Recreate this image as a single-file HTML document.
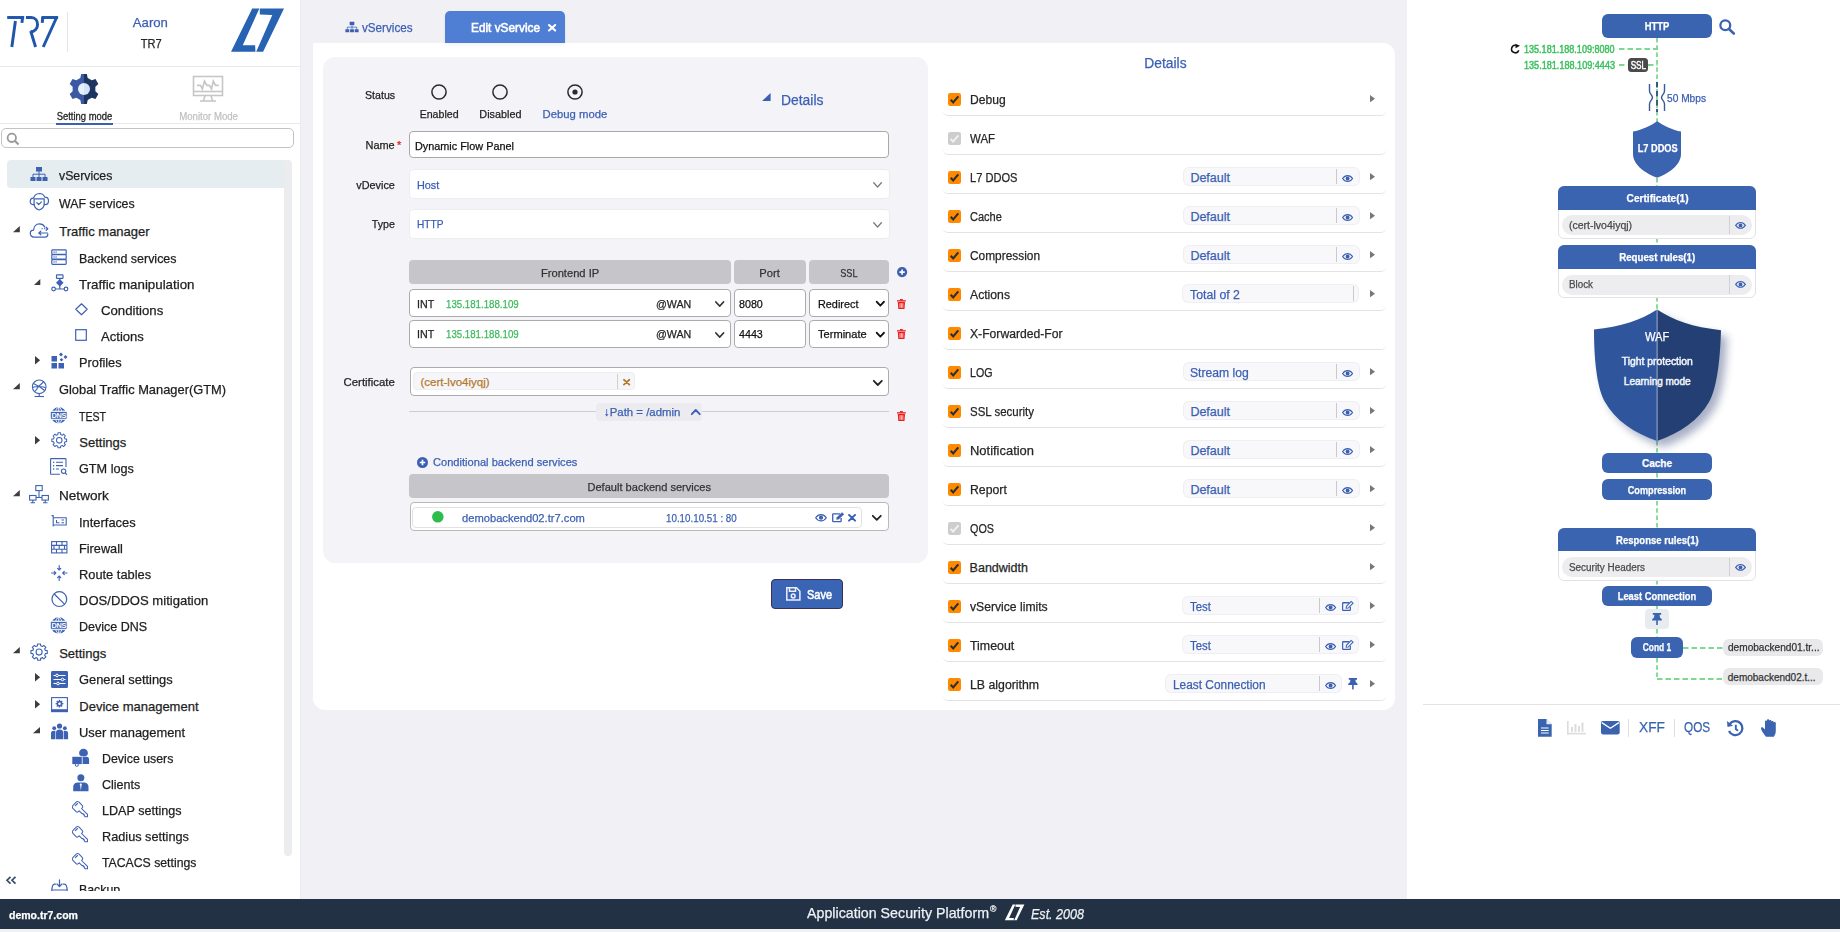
<!DOCTYPE html>
<html><head><meta charset="utf-8"><title>TR7 - Edit vService</title>
<style>
html,body{margin:0;padding:0;width:1840px;height:932px;overflow:hidden;background:#fff;}
body{position:relative;font-family:"Liberation Sans",sans-serif;}
.t{position:absolute;line-height:1;white-space:nowrap;-webkit-text-stroke:0.25px currentColor;}
.r{position:absolute;box-sizing:border-box;}
.s{position:absolute;overflow:visible;}
</style></head><body>
<div class="r" style="left:0.00px;top:0.00px;width:300.00px;height:899.00px;background:#fff;"></div>
<div class="r" style="left:300.00px;top:0.00px;width:1107.00px;height:899.00px;background:#f0f0f5;"></div>
<div class="r" style="left:1407.00px;top:0.00px;width:433.00px;height:899.00px;background:#fff;"></div>
<div class="r" style="left:0.00px;top:899.00px;width:1840.00px;height:29.50px;background:#223244;"></div>
<div class="r" style="left:0.00px;top:928.50px;width:1840.00px;height:3.50px;background:#f1f1f3;"></div>
<svg class="s" style="left:4.00px;top:12.00px;" width="60.00" height="38.00" viewBox="0 0 1472 932" preserveAspectRatio="none"><g fill="none" stroke="#1f55ad" stroke-width="72" stroke-linecap="butt" stroke-linejoin="miter"><path d="M78,135 L495,135"/><path d="M455,135 L440,265"/><path d="M280,222 L192,858"/><path d="M538,135 L665,135 C770,135 823,215 823,305 C823,410 745,485 650,485"/><path d="M655,470 L775,858"/><path d="M918,135 L1328,135"/><path d="M950,135 L938,265"/><path d="M1290,135 L962,858"/></g></svg>
<div class="r" style="left:67.00px;top:12.00px;width:1.00px;height:40.00px;background:#e3e7ec;"></div>
<div class="t" style="left:133.35px;top:16.29px;font-size:13px;color:#3b5fb3;font-weight:400;transform:scaleX(1.0118);transform-origin:center 0;">Aaron</div>
<div class="t" style="left:138.72px;top:37.29px;font-size:13px;color:#262626;font-weight:400;transform:scaleX(0.8551);transform-origin:center 0;">TR7</div>
<svg class="s" style="left:226.00px;top:4.00px;" width="64.00" height="52.00" viewBox="0 0 1147 932" preserveAspectRatio="none"><polygon fill="#2862b2" points="470,80 598,80 300,740 522,740 528,855 90,855"/><polygon fill="#2862b2" points="606,80 1040,80 665,855 542,855 830,195 606,190"/></svg>
<div class="r" style="left:0.00px;top:66.00px;width:300.00px;height:1.00px;background:#e6eaee;"></div>
<div class="r" style="left:300.00px;top:0.00px;width:1.00px;height:899.00px;background:#e7eaee;"></div>
<div class="r" style="left:0.00px;top:123.00px;width:300.00px;height:1.00px;background:#e6eaee;"></div>
<svg class="s" style="left:64.00px;top:69.00px;" width="40.00" height="40.00" viewBox="0 0 40 40" preserveAspectRatio="none"><defs><clipPath id="gl"><rect x="0" y="0" width="20" height="40"/></clipPath><clipPath id="gr"><rect x="20" y="0" width="20" height="40"/></clipPath></defs><path d="M16.30,9.01 L17.15,5.07 L22.85,5.07 L23.70,9.01 L27.67,11.30 L31.51,10.07 L34.35,15.00 L31.37,17.71 L31.37,22.29 L34.35,25.00 L31.51,29.93 L27.67,28.70 L23.70,30.99 L22.85,34.93 L17.15,34.93 L16.30,30.99 L12.33,28.70 L8.49,29.93 L5.65,25.00 L8.63,22.29 L8.63,17.71 L5.65,15.00 L8.49,10.07 L12.33,11.30Z" fill="#3b59a3" clip-path="url(#gl)"/><path d="M16.30,9.01 L17.15,5.07 L22.85,5.07 L23.70,9.01 L27.67,11.30 L31.51,10.07 L34.35,15.00 L31.37,17.71 L31.37,22.29 L34.35,25.00 L31.51,29.93 L27.67,28.70 L23.70,30.99 L22.85,34.93 L17.15,34.93 L16.30,30.99 L12.33,28.70 L8.49,29.93 L5.65,25.00 L8.63,22.29 L8.63,17.71 L5.65,15.00 L8.49,10.07 L12.33,11.30Z" fill="#1d3461" clip-path="url(#gr)"/><circle cx="20" cy="20" r="10.6" fill="#3b59a3" clip-path="url(#gl)"/><circle cx="20" cy="20" r="10.6" fill="#1d3461" clip-path="url(#gr)"/><circle cx="20" cy="20" r="6" fill="#e6f0fd" clip-path="url(#gl)"/><circle cx="20" cy="20" r="6" fill="#d3e3f9" clip-path="url(#gr)"/></svg>
<div class="t" style="left:54.94px;top:111.63px;font-size:10px;color:#262626;font-weight:400;-webkit-text-stroke:0.30px #262626;transform:scaleX(0.9418);transform-origin:center 0;">Setting mode</div>
<div class="r" style="left:56.00px;top:123.00px;width:57.00px;height:2.00px;background:#3b5fb3;"></div>
<svg class="s" style="left:192.00px;top:75.00px;" width="32.00" height="28.00" viewBox="0 0 32 28" preserveAspectRatio="none"><g fill="none" stroke="#c6c6c6" stroke-width="1.6"><rect x="1.5" y="1.5" width="29" height="19"/><line x1="1.5" y1="16.5" x2="30.5" y2="16.5"/><path d="M5,10.4 H8.5 L10.3,14 L12.5,6.1 L14.9,10.4 H17.4 L19.5,14 L21.3,6.1 L23.5,10.4 H26.8"/><path d="M13,21 L11.5,25.5 M19,21 L20.5,25.5"/><line x1="8" y1="26" x2="24" y2="26"/></g></svg>
<div class="t" style="left:178.03px;top:111.63px;font-size:10px;color:#c2c2c2;font-weight:400;transform:scaleX(0.9617);transform-origin:center 0;">Monitor Mode</div>
<div class="r" style="left:1.00px;top:128.00px;width:293.00px;height:20.00px;border:1px solid #c3c3c3;border-radius:5px;background:#fff;"></div>
<svg class="s" style="left:6.00px;top:132.00px;" width="14.00" height="14.00" viewBox="0 0 14 14" preserveAspectRatio="none"><circle cx="5.8" cy="5.8" r="4.2" fill="none" stroke="#9a9a9a" stroke-width="1.8"/><line x1="8.8" y1="8.8" x2="12.5" y2="12.5" stroke="#9a9a9a" stroke-width="2"/></svg>
<div class="r" style="left:7.00px;top:160.00px;width:281.00px;height:28.00px;background:#e6edf1;border-radius:4px;"></div>
<div class="r" style="left:284.00px;top:160.00px;width:8.00px;height:696.00px;background:#ebecee;border-radius:4px;"></div>
<svg class="s" style="left:30.00px;top:166.00px;" width="18.00" height="16.00" viewBox="0 0 18 16" preserveAspectRatio="none"><g fill="#3d62b4"><rect x="6" y="1" width="6" height="4.5"/><rect x="0.5" y="11" width="5" height="4"/><rect x="6.5" y="11" width="5" height="4"/><rect x="12.5" y="11" width="5" height="4"/></g><path d="M9,5.5 V11 M3,11 V8.2 H15 V11" fill="none" stroke="#3d62b4" stroke-width="1" stroke-linecap="round" stroke-linejoin="round"/></svg>
<svg class="s" style="left:30.00px;top:192.00px;" width="19.00" height="19.00" viewBox="0 0 19 19" preserveAspectRatio="none"><path d="M4.1,12.6 H3 C0.9,12.6 -0.1,10.8 0.3,8.8 C0.6,7 2,6 3.6,6.2 C4.2,3.5 6.2,1.6 9.3,1.5 C12,1.5 14,3.2 14.8,5.2 C17,5.2 18.5,6.8 18.5,9 C18.5,11.2 17,12.6 15,12.6 H14.2" fill="none" stroke="#3d62b4" stroke-width="1.2" stroke-linecap="round" stroke-linejoin="round"/><path d="M4.1,6.9 H14.2 V12 C14.2,15 12,17 9.15,18 C6.3,17 4.1,15 4.1,12 Z" fill="none" stroke="#3d62b4" stroke-width="1.2" stroke-linecap="round" stroke-linejoin="round"/><path d="M6.8,10.6 L8.7,12.5 L11.5,9.9" fill="none" stroke="#3d62b4" stroke-width="1.2" stroke-linecap="round" stroke-linejoin="round"/></svg>
<svg class="s" style="left:29.50px;top:222.50px;" width="19.00" height="15.00" viewBox="0 0 19 15" preserveAspectRatio="none"><path d="M17.8,11.2 C17.8,13 16.6,14 15,14 H3.8 C1.8,14 0.3,12.5 0.3,10.5 C0.3,8.5 1.8,7 3.6,7 C3.8,3.5 6.2,0.9 9.5,0.9 C11.8,0.9 13.8,2.1 14.8,4" fill="none" stroke="#3d62b4" stroke-width="1.25" stroke-linecap="round" stroke-linejoin="round"/><path d="M17.5,10 H8.8 M10.8,8.2 L8.8,10 L10.8,11.8" fill="none" stroke="#3d62b4" stroke-width="1.2" stroke-linecap="round" stroke-linejoin="round"/><path d="M11.5,5.8 H17.6" stroke="#3d62b4" stroke-width="1.1" stroke-dasharray="1.3,1.2"/><path d="M16.2,4.3 L17.8,5.8 L16.2,7.3" fill="none" stroke="#3d62b4" stroke-width="1.2" stroke-linecap="round" stroke-linejoin="round"/></svg>
<svg class="s" style="left:13.00px;top:225.50px;" width="6.80" height="6.20" viewBox="0 0 10 10" preserveAspectRatio="none"><polygon points="0,10 10,0 10,10" fill="#3d3d3d"/></svg>
<svg class="s" style="left:51.00px;top:248.50px;" width="16.00" height="16.50" viewBox="0 0 16 16.5" preserveAspectRatio="none"><g fill="none" stroke="#3d62b4" stroke-width="1.2"><rect x="0.8" y="0.8" width="14.4" height="4.6" rx="0.8"/><rect x="0.8" y="5.6" width="14.4" height="4.6" rx="0.8"/><rect x="0.8" y="10.6" width="14.4" height="4.8" rx="0.8"/></g><g fill="#3d62b4"><rect x="2.5" y="2.5" width="1.2" height="1.2"/><rect x="4.5" y="2.5" width="1.2" height="1.2"/><rect x="2.5" y="7.4" width="1.2" height="1.2"/><rect x="4.5" y="7.4" width="1.2" height="1.2"/><rect x="2.5" y="12.4" width="1.2" height="1.2"/><rect x="4.5" y="12.4" width="1.2" height="1.2"/></g></svg>
<svg class="s" style="left:33.50px;top:279.00px;" width="6.30" height="6.00" viewBox="0 0 10 10" preserveAspectRatio="none"><polygon points="0,10 10,0 10,10" fill="#3d3d3d"/></svg>
<svg class="s" style="left:50.50px;top:274.00px;" width="17.50" height="18.00" viewBox="0 0 17.5 18" preserveAspectRatio="none"><g fill="none" stroke="#3d62b4" stroke-width="1.2"><rect x="5.5" y="0.8" width="6.5" height="3.5" rx="0.6"/><circle cx="2.6" cy="15" r="1.8"/><circle cx="15" cy="15" r="1.8"/><path d="M8.8,4.3 V6.5 M8.8,11 V15 M4.4,15 H13.2"/></g><polygon fill="#3d62b4" points="8.8,5 12.6,8.7 8.8,12.4 5,8.7"/></svg>
<svg class="s" style="left:74.50px;top:303.00px;" width="13.00" height="12.50" viewBox="0 0 13 12.5" preserveAspectRatio="none"><path d="M6.5,0.8 L12.2,6.25 L6.5,11.7 L0.8,6.25 Z" fill="none" stroke="#3d62b4" stroke-width="1.2" stroke-linecap="round" stroke-linejoin="round"/></svg>
<svg class="s" style="left:75.00px;top:329.00px;" width="12.00" height="12.00" viewBox="0 0 12 12" preserveAspectRatio="none"><rect x="0.7" y="0.7" width="10.6" height="10.6" fill="none" stroke="#3d62b4" stroke-width="1.2"/></svg>
<svg class="s" style="left:35.20px;top:356.40px;" width="5.10" height="8.40" viewBox="0 0 10 10" preserveAspectRatio="none"><polygon points="0,0 10,5 0,10" fill="#3d3d3d"/></svg>
<svg class="s" style="left:50.50px;top:352.00px;" width="17.00" height="17.00" viewBox="0 0 17 17" preserveAspectRatio="none"><g fill="#3d62b4"><rect x="0.5" y="4" width="5.5" height="5.5"/><rect x="0.5" y="11" width="5.5" height="5.5"/><rect x="7.5" y="11" width="5.5" height="5.5"/><polygon points="10,0.5 12,2.5 10,4.5 8,2.5"/><polygon points="14.5,3 16.5,5 14.5,7 12.5,5"/><polygon points="10.5,6 12.3,7.8 10.5,9.6 8.7,7.8"/></g></svg>
<svg class="s" style="left:13.00px;top:383.30px;" width="6.80" height="6.20" viewBox="0 0 10 10" preserveAspectRatio="none"><polygon points="0,10 10,0 10,10" fill="#3d3d3d"/></svg>
<svg class="s" style="left:30.50px;top:378.50px;" width="16.50" height="18.50" viewBox="0 0 16.5 18.5" preserveAspectRatio="none"><g fill="none" stroke="#3d62b4" stroke-width="1.1"><circle cx="8.2" cy="7.8" r="6.8"/><path d="M2.5,4.5 C6,6 10,8.5 13.5,11.5 M4,12.5 C6,9 9,5.5 12.5,3 M1.6,8.5 C5,7 10,7.5 14.5,8.5"/><path d="M3.5,17.5 H13"/><path d="M8.2,14.6 V17.5"/></g></svg>
<svg class="s" style="left:50.30px;top:406.50px;" width="17.50" height="16.70" viewBox="0 0 18 17" preserveAspectRatio="none"><circle cx="9" cy="8.5" r="8.2" fill="#3d62b4"/><g fill="none" stroke="#fff" stroke-width="0.9"><ellipse cx="9" cy="8.5" rx="3.6" ry="8.2"/><path d="M9,0 V17 M1.5,4.2 H16.5 M1.5,12.8 H16.5"/></g><rect x="0.4" y="4.6" width="17.2" height="7.8" rx="1.2" fill="#3d62b4" stroke="#fff" stroke-width="0.8"/><text x="9" y="11.3" text-anchor="middle" font-family="Liberation Sans" font-weight="700" font-size="7.6" fill="#fff" letter-spacing="-0.4">DNS</text></svg>
<svg class="s" style="left:35.20px;top:436.40px;" width="5.10" height="8.40" viewBox="0 0 10 10" preserveAspectRatio="none"><polygon points="0,0 10,5 0,10" fill="#3d3d3d"/></svg>
<svg class="s" style="left:50.80px;top:432.30px;" width="16.50" height="16.70" viewBox="0 0 18 18" preserveAspectRatio="none"><path d="M7.46,2.79 L7.56,0.93 L10.44,0.93 L10.54,2.79 L12.30,3.52 L13.69,2.27 L15.73,4.31 L14.48,5.70 L15.21,7.46 L17.07,7.56 L17.07,10.44 L15.21,10.54 L14.48,12.30 L15.73,13.69 L13.69,15.73 L12.30,14.48 L10.54,15.21 L10.44,17.07 L7.56,17.07 L7.46,15.21 L5.70,14.48 L4.31,15.73 L2.27,13.69 L3.52,12.30 L2.79,10.54 L0.93,10.44 L0.93,7.56 L2.79,7.46 L3.52,5.70 L2.27,4.31 L4.31,2.27 L5.70,3.52Z" fill="none" stroke="#3d62b4" stroke-width="1.1" stroke-linejoin="round"/><circle cx="9" cy="9" r="3" fill="none" stroke="#3d62b4" stroke-width="1.1"/></svg>
<svg class="s" style="left:50.30px;top:458.30px;" width="17.70" height="17.50" viewBox="0 0 17.7 17.5" preserveAspectRatio="none"><g fill="none" stroke="#3d62b4" stroke-width="1.1"><path d="M10,16.2 H1.2 C0.8,16.2 0.6,16 0.6,15.5 V1.2 C0.6,0.8 0.8,0.6 1.2,0.6 H15.4 C15.8,0.6 16,0.8 16,1.2 V9"/><circle cx="13.6" cy="13.2" r="2.2"/><path d="M15.2,14.8 L17,16.8"/><path d="M6,4.2 H13 M6,7.6 H13 M6,11 H9"/></g><g fill="#3d62b4"><rect x="3" y="3.6" width="1.3" height="1.3"/><rect x="3" y="7" width="1.3" height="1.3"/><rect x="3" y="10.4" width="1.3" height="1.3"/></g></svg>
<svg class="s" style="left:13.00px;top:489.70px;" width="6.80" height="6.20" viewBox="0 0 10 10" preserveAspectRatio="none"><polygon points="0,10 10,0 10,10" fill="#3d3d3d"/></svg>
<svg class="s" style="left:29.00px;top:484.80px;" width="20.00" height="18.40" viewBox="0 0 20 18.4" preserveAspectRatio="none"><g fill="none" stroke="#3d62b4" stroke-width="1.1"><rect x="6.8" y="0.6" width="6.4" height="5"/><rect x="0.6" y="10.5" width="6.4" height="4.6"/><rect x="13" y="10.5" width="6.4" height="4.6"/><path d="M10,5.6 V12.5 M7,12.5 H13 M3.8,15.1 V17.6 M16.2,15.1 V17.6 M1.5,17.8 H6 M14,17.8 H18.5"/></g></svg>
<svg class="s" style="left:51.30px;top:514.50px;" width="16.00" height="13.00" viewBox="0 0 16 13" preserveAspectRatio="none"><g fill="none" stroke="#3d62b4" stroke-width="1.1"><path d="M0.6,0.6 H2.2 V11.5 M2.2,2.8 H15.2 V10 H2.2"/><path d="M5.5,5 V7.8 H8.5 M10.5,5 H13 M10.5,7.8 H13"/></g></svg>
<svg class="s" style="left:50.80px;top:540.80px;" width="16.50" height="12.50" viewBox="0 0 16.5 12.5" preserveAspectRatio="none"><g fill="none" stroke="#3d62b4" stroke-width="1.1"><rect x="0.6" y="0.6" width="15.3" height="11.3"/><path d="M0.6,4.4 H15.9 M0.6,8.2 H15.9 M5.5,0.6 V4.4 M11,0.6 V4.4 M3,4.4 V8.2 M8.2,4.4 V8.2 M13.5,4.4 V8.2 M5.5,8.2 V11.9 M11,8.2 V11.9"/></g></svg>
<svg class="s" style="left:50.80px;top:565.00px;" width="16.50" height="16.00" viewBox="0 0 16.5 16" preserveAspectRatio="none"><path d="M8.2,0.5 V5 M6.6,3.4 L8.2,5 L9.8,3.4 M8.2,15.5 V11 M6.6,12.6 L8.2,11 L9.8,12.6 M0.5,8 H4.8 M3.2,6.4 L4.8,8 L3.2,9.6 M16,8 H11.7 M13.3,6.4 L11.7,8 L13.3,9.6" fill="none" stroke="#3d62b4" stroke-width="1.1" stroke-linecap="round" stroke-linejoin="round"/></svg>
<svg class="s" style="left:50.50px;top:590.80px;" width="16.70" height="16.20" viewBox="0 0 16.7 16.2" preserveAspectRatio="none"><circle cx="8.35" cy="8.1" r="7.4" fill="none" stroke="#3d62b4" stroke-width="1.2"/><path d="M3.2,3 L13.5,13.2" stroke="#3d62b4" stroke-width="1.2"/></svg>
<svg class="s" style="left:50.30px;top:616.70px;" width="17.50" height="16.80" viewBox="0 0 18 17" preserveAspectRatio="none"><circle cx="9" cy="8.5" r="8.2" fill="#3d62b4"/><g fill="none" stroke="#fff" stroke-width="0.9"><ellipse cx="9" cy="8.5" rx="3.6" ry="8.2"/><path d="M9,0 V17 M1.5,4.2 H16.5 M1.5,12.8 H16.5"/></g><rect x="0.4" y="4.6" width="17.2" height="7.8" rx="1.2" fill="#3d62b4" stroke="#fff" stroke-width="0.8"/><text x="9" y="11.3" text-anchor="middle" font-family="Liberation Sans" font-weight="700" font-size="7.6" fill="#fff" letter-spacing="-0.4">DNS</text></svg>
<svg class="s" style="left:13.00px;top:647.30px;" width="6.80" height="6.20" viewBox="0 0 10 10" preserveAspectRatio="none"><polygon points="0,10 10,0 10,10" fill="#3d3d3d"/></svg>
<svg class="s" style="left:29.80px;top:643.00px;" width="18.20" height="18.20" viewBox="0 0 18 18" preserveAspectRatio="none"><path d="M7.46,2.79 L7.56,0.93 L10.44,0.93 L10.54,2.79 L12.30,3.52 L13.69,2.27 L15.73,4.31 L14.48,5.70 L15.21,7.46 L17.07,7.56 L17.07,10.44 L15.21,10.54 L14.48,12.30 L15.73,13.69 L13.69,15.73 L12.30,14.48 L10.54,15.21 L10.44,17.07 L7.56,17.07 L7.46,15.21 L5.70,14.48 L4.31,15.73 L2.27,13.69 L3.52,12.30 L2.79,10.54 L0.93,10.44 L0.93,7.56 L2.79,7.46 L3.52,5.70 L2.27,4.31 L4.31,2.27 L5.70,3.52Z" fill="none" stroke="#3d62b4" stroke-width="1.1" stroke-linejoin="round"/><circle cx="9" cy="9" r="3" fill="none" stroke="#3d62b4" stroke-width="1.1"/></svg>
<svg class="s" style="left:35.20px;top:673.20px;" width="5.10" height="8.40" viewBox="0 0 10 10" preserveAspectRatio="none"><polygon points="0,0 10,5 0,10" fill="#3d3d3d"/></svg>
<svg class="s" style="left:50.50px;top:670.50px;" width="17.00" height="17.10" viewBox="0 0 17 17.1" preserveAspectRatio="none"><rect x="0" y="0" width="17" height="17.1" rx="1.5" fill="#3d62b4"/><g stroke="#fff" stroke-width="1" fill="#3d62b4"><path d="M2.5,4.5 H14.5 M2.5,8.5 H14.5 M2.5,12.5 H14.5"/><circle cx="6" cy="4.5" r="1.3"/><circle cx="11.5" cy="8.5" r="1.3"/><circle cx="7" cy="12.5" r="1.3"/></g></svg>
<svg class="s" style="left:35.20px;top:699.50px;" width="5.10" height="8.40" viewBox="0 0 10 10" preserveAspectRatio="none"><polygon points="0,0 10,5 0,10" fill="#3d3d3d"/></svg>
<svg class="s" style="left:50.50px;top:697.00px;" width="17.00" height="15.20" viewBox="0 0 17 15.2" preserveAspectRatio="none"><g fill="none" stroke="#3d62b4" stroke-width="1.1"><rect x="0.6" y="0.6" width="15.8" height="12.2"/></g><rect x="0" y="12.8" width="17" height="2.4" fill="#3d62b4"/><path d="M7.82,3.88 L7.81,2.86 L9.19,2.86 L9.18,3.88 L10.02,4.23 L10.73,3.50 L11.70,4.47 L10.97,5.18 L11.32,6.02 L12.34,6.01 L12.34,7.39 L11.32,7.38 L10.97,8.22 L11.70,8.93 L10.73,9.90 L10.02,9.17 L9.18,9.52 L9.19,10.54 L7.81,10.54 L7.82,9.52 L6.98,9.17 L6.27,9.90 L5.30,8.93 L6.03,8.22 L5.68,7.38 L4.66,7.39 L4.66,6.01 L5.68,6.02 L6.03,5.18 L5.30,4.47 L6.27,3.50 L6.98,4.23Z" fill="#3d62b4"/><circle cx="8.5" cy="6.7" r="1.3" fill="#fff"/></svg>
<svg class="s" style="left:32.70px;top:726.50px;" width="7.00" height="6.30" viewBox="0 0 10 10" preserveAspectRatio="none"><polygon points="0,10 10,0 10,10" fill="#3d3d3d"/></svg>
<svg class="s" style="left:50.50px;top:722.80px;" width="17.10" height="16.20" viewBox="0 0 17 16.2" preserveAspectRatio="none"><g fill="#3d62b4"><circle cx="8.5" cy="3" r="2.6"/><circle cx="3.2" cy="5.2" r="1.9"/><circle cx="13.8" cy="5.2" r="1.9"/><path d="M5,16.2 V9.5 C5,7.5 6.5,6.6 8.5,6.6 C10.5,6.6 12,7.5 12,9.5 V16.2 Z"/><path d="M0,16.2 V10.5 C0,8.5 1,7.8 3.2,7.8 C4,7.8 4.4,8 4.4,8 V16.2 Z"/><path d="M17,16.2 V10.5 C17,8.5 16,7.8 13.8,7.8 C13,7.8 12.6,8 12.6,8 V16.2 Z"/></g></svg>
<svg class="s" style="left:72.30px;top:748.50px;" width="17.20" height="17.50" viewBox="0 0 17.2 17.5" preserveAspectRatio="none"><g fill="#3d62b4"><path d="M11.5,-0.3 C14,-0.3 15.9,1.5 15.9,4 C15.9,5.8 14.8,7 13.5,7.2 H9.5 C8.2,7 7.1,5.8 7.1,4 C7.1,1.5 9,-0.3 11.5,-0.3 Z"/><path d="M10.6,7.8 H14.5 C16.1,7.8 17.1,8.8 17.1,10.5 V15.1 H10.6 Z"/><rect x="0.3" y="7.8" width="9.5" height="7.3"/></g><circle cx="4.8" cy="15.9" r="1.5" fill="#fff" stroke="#3d62b4" stroke-width="1"/></svg>
<svg class="s" style="left:73.30px;top:774.30px;" width="15.70" height="17.30" viewBox="0 0 15.7 17.3" preserveAspectRatio="none"><g fill="#3d62b4"><circle cx="7.85" cy="3.8" r="3.5"/><path d="M0.2,17.3 V13 C0.2,10 2.5,8.6 5.2,8.6 H10.5 C13.2,8.6 15.5,10 15.5,13 V17.3 Z"/></g><path d="M7.85,9 L7,10.2 L7.85,16.5 L8.7,10.2 Z" fill="#fff"/></svg>
<svg class="s" style="left:72.30px;top:800.60px;" width="17.00" height="16.60" viewBox="0 0 17 16.6" preserveAspectRatio="none"><path d="M1.2,4.2 L4.5,0.9 C5.2,0.3 6,0.3 6.8,0.9 L10.2,4.3 C10.9,5 10.9,5.8 10.4,6.6 L9.5,7.5 L15.5,13.5 L15.5,15.8 L13.2,15.8 L12.4,15 L12.4,13.8 L11.2,13.8 L11.2,12.6 L10,12.6 L7.2,9.8 L6.3,10.7 C5.6,11.3 4.8,11.3 4.1,10.7 L0.9,7.4 C0.3,6.7 0.4,4.9 1.2,4.2 Z M3.3,4.7 L5.6,2.5" fill="none" stroke="#3d62b4" stroke-width="1.05" stroke-linecap="round" stroke-linejoin="round"/></svg>
<svg class="s" style="left:72.30px;top:826.40px;" width="17.00" height="16.60" viewBox="0 0 17 16.6" preserveAspectRatio="none"><path d="M1.2,4.2 L4.5,0.9 C5.2,0.3 6,0.3 6.8,0.9 L10.2,4.3 C10.9,5 10.9,5.8 10.4,6.6 L9.5,7.5 L15.5,13.5 L15.5,15.8 L13.2,15.8 L12.4,15 L12.4,13.8 L11.2,13.8 L11.2,12.6 L10,12.6 L7.2,9.8 L6.3,10.7 C5.6,11.3 4.8,11.3 4.1,10.7 L0.9,7.4 C0.3,6.7 0.4,4.9 1.2,4.2 Z M3.3,4.7 L5.6,2.5" fill="none" stroke="#3d62b4" stroke-width="1.05" stroke-linecap="round" stroke-linejoin="round"/></svg>
<svg class="s" style="left:72.30px;top:852.80px;" width="17.00" height="16.60" viewBox="0 0 17 16.6" preserveAspectRatio="none"><path d="M1.2,4.2 L4.5,0.9 C5.2,0.3 6,0.3 6.8,0.9 L10.2,4.3 C10.9,5 10.9,5.8 10.4,6.6 L9.5,7.5 L15.5,13.5 L15.5,15.8 L13.2,15.8 L12.4,15 L12.4,13.8 L11.2,13.8 L11.2,12.6 L10,12.6 L7.2,9.8 L6.3,10.7 C5.6,11.3 4.8,11.3 4.1,10.7 L0.9,7.4 C0.3,6.7 0.4,4.9 1.2,4.2 Z M3.3,4.7 L5.6,2.5" fill="none" stroke="#3d62b4" stroke-width="1.05" stroke-linecap="round" stroke-linejoin="round"/></svg>
<svg class="s" style="left:50.50px;top:879.00px;" width="17.00" height="14.00" viewBox="0 0 17 14" preserveAspectRatio="none"><path d="M8.5,0.8 V7.5 M6,5 L8.5,7.5 L11,5 M4.5,5.2 H3.5 C2,5.2 1,7.5 0.8,11.8 M12.5,5.2 H13.5 C15,5.2 16,7.5 16.2,11.8 M0.8,11 H16.2" fill="none" stroke="#3d62b4" stroke-width="1.2" stroke-linecap="round" stroke-linejoin="round"/></svg>
<div class="t" style="left:59.30px;top:169.39px;font-size:13px;color:#1e1e1e;font-weight:400;transform:scaleX(0.9459);transform-origin:left 0;">vServices</div>
<div class="t" style="left:59.30px;top:197.39px;font-size:13px;color:#1e1e1e;font-weight:400;transform:scaleX(0.9487);transform-origin:left 0;">WAF services</div>
<div class="t" style="left:59.30px;top:225.09px;font-size:13px;color:#1e1e1e;font-weight:400;">Traffic manager</div>
<div class="t" style="left:79.30px;top:252.29px;font-size:13px;color:#1e1e1e;font-weight:400;transform:scaleX(0.9570);transform-origin:left 0;">Backend services</div>
<div class="t" style="left:79.30px;top:278.39px;font-size:13px;color:#1e1e1e;font-weight:400;transform:scaleX(1.0246);transform-origin:left 0;">Traffic manipulation</div>
<div class="t" style="left:101.30px;top:304.19px;font-size:13px;color:#1e1e1e;font-weight:400;transform:scaleX(1.0142);transform-origin:left 0;">Conditions</div>
<div class="t" style="left:101.30px;top:329.89px;font-size:13px;color:#1e1e1e;font-weight:400;transform:scaleX(1.0063);transform-origin:left 0;">Actions</div>
<div class="t" style="left:79.30px;top:356.19px;font-size:13px;color:#1e1e1e;font-weight:400;transform:scaleX(0.9827);transform-origin:left 0;">Profiles</div>
<div class="t" style="left:59.20px;top:382.59px;font-size:13px;color:#1e1e1e;font-weight:400;transform:scaleX(0.9898);transform-origin:left 0;">Global Traffic Manager(GTM)</div>
<div class="t" style="left:79.30px;top:410.39px;font-size:13px;color:#1e1e1e;font-weight:400;transform:scaleX(0.8156);transform-origin:left 0;">TEST</div>
<div class="t" style="left:79.30px;top:436.19px;font-size:13px;color:#1e1e1e;font-weight:400;">Settings</div>
<div class="t" style="left:79.30px;top:462.49px;font-size:13px;color:#1e1e1e;font-weight:400;transform:scaleX(0.9744);transform-origin:left 0;">GTM logs</div>
<div class="t" style="left:59.20px;top:489.09px;font-size:13px;color:#1e1e1e;font-weight:400;transform:scaleX(1.0445);transform-origin:left 0;">Network</div>
<div class="t" style="left:79.30px;top:516.19px;font-size:13px;color:#1e1e1e;font-weight:400;transform:scaleX(0.9933);transform-origin:left 0;">Interfaces</div>
<div class="t" style="left:79.30px;top:541.89px;font-size:13px;color:#1e1e1e;font-weight:400;transform:scaleX(0.9780);transform-origin:left 0;">Firewall</div>
<div class="t" style="left:79.30px;top:567.99px;font-size:13px;color:#1e1e1e;font-weight:400;transform:scaleX(0.9878);transform-origin:left 0;">Route tables</div>
<div class="t" style="left:79.30px;top:594.49px;font-size:13px;color:#1e1e1e;font-weight:400;transform:scaleX(1.0055);transform-origin:left 0;">DOS/DDOS mitigation</div>
<div class="t" style="left:79.30px;top:619.89px;font-size:13px;color:#1e1e1e;font-weight:400;transform:scaleX(0.9605);transform-origin:left 0;">Device DNS</div>
<div class="t" style="left:59.20px;top:646.99px;font-size:13px;color:#1e1e1e;font-weight:400;">Settings</div>
<div class="t" style="left:79.30px;top:673.49px;font-size:13px;color:#1e1e1e;font-weight:400;transform:scaleX(0.9898);transform-origin:left 0;">General settings</div>
<div class="t" style="left:79.30px;top:700.19px;font-size:13px;color:#1e1e1e;font-weight:400;">Device management</div>
<div class="t" style="left:79.40px;top:725.89px;font-size:13px;color:#1e1e1e;font-weight:400;transform:scaleX(0.9921);transform-origin:left 0;">User management</div>
<div class="t" style="left:101.60px;top:752.09px;font-size:13px;color:#1e1e1e;font-weight:400;transform:scaleX(0.9502);transform-origin:left 0;">Device users</div>
<div class="t" style="left:101.60px;top:778.29px;font-size:13px;color:#1e1e1e;font-weight:400;transform:scaleX(0.9638);transform-origin:left 0;">Clients</div>
<div class="t" style="left:101.60px;top:804.09px;font-size:13px;color:#1e1e1e;font-weight:400;transform:scaleX(0.9691);transform-origin:left 0;">LDAP settings</div>
<div class="t" style="left:101.60px;top:829.89px;font-size:13px;color:#1e1e1e;font-weight:400;transform:scaleX(0.9777);transform-origin:left 0;">Radius settings</div>
<div class="t" style="left:101.60px;top:856.29px;font-size:13px;color:#1e1e1e;font-weight:400;transform:scaleX(0.9423);transform-origin:left 0;">TACACS settings</div>
<div class="t" style="left:79.40px;top:882.79px;font-size:13px;color:#1e1e1e;font-weight:400;transform:scaleX(0.9501);transform-origin:left 0;">Backup</div>
<div class="r" style="left:0.00px;top:890.60px;width:300.00px;height:8.40px;background:#fff;"></div>
<svg class="s" style="left:6.00px;top:876.00px;" width="10.50" height="8.50" viewBox="0 0 10.5 8.5" preserveAspectRatio="none"><path d="M4.5,0.8 L1,4.25 L4.5,7.7 M9.5,0.8 L6,4.25 L9.5,7.7" fill="none" stroke="#3b4a68" stroke-width="1.7"/></svg>
<svg class="s" style="left:345.00px;top:21.00px;" width="14.00" height="12.00" viewBox="0 0 18 16" preserveAspectRatio="none"><g fill="#3b5fb3"><rect x="6" y="1" width="6" height="4.5"/><rect x="0.5" y="11" width="5" height="4"/><rect x="6.5" y="11" width="5" height="4"/><rect x="12.5" y="11" width="5" height="4"/></g><path d="M9,5.5 V11 M3,11 V8.2 H15 V11" fill="none" stroke="#3b5fb3" stroke-width="1"/></svg>
<div class="t" style="left:362.00px;top:21.49px;font-size:13px;color:#3b5fb3;font-weight:400;transform:scaleX(0.8980);transform-origin:left 0;">vServices</div>
<div class="r" style="left:313.00px;top:43.00px;width:1082.00px;height:667.00px;background:#fff;border-radius:0 12px 12px 12px;"></div>
<div class="r" style="left:445.00px;top:11.00px;width:120.00px;height:32.00px;background:#4f7fd4;border-radius:5px 5px 0 0;box-shadow:0 2px 4px rgba(0,0,0,0.06);"></div>
<div class="t" style="left:470.70px;top:21.49px;font-size:13px;color:#fff;font-weight:400;-webkit-text-stroke:0.58px #fff;transform:scaleX(0.9095);transform-origin:left 0;">Edit vService</div>
<svg class="s" style="left:547.80px;top:23.50px;" width="8.20" height="7.50" viewBox="0 0 8 8" preserveAspectRatio="none"><path d="M1,1 L7,7 M7,1 L1,7" stroke="#fff" stroke-width="2.1" stroke-linecap="round"/></svg>
<div class="r" style="left:323.00px;top:57.00px;width:605.00px;height:506.00px;background:#f3f3f8;border-radius:12px;"></div>
<div class="t" style="left:364.80px;top:89.76px;font-size:11.5px;color:#232323;font-weight:400;transform:scaleX(0.9232);transform-origin:left 0;">Status</div>
<svg class="s" style="left:430.00px;top:83.00px;" width="18.00" height="18.00" viewBox="0 0 18 18" preserveAspectRatio="none"><circle cx="9" cy="9" r="7.1" fill="none" stroke="#2a2a2a" stroke-width="1.5"/></svg>
<div class="t" style="left:417.90px;top:108.66px;font-size:11.5px;color:#232323;font-weight:400;transform:scaleX(0.9217);transform-origin:center 0;">Enabled</div>
<svg class="s" style="left:491.40px;top:83.00px;" width="18.00" height="18.00" viewBox="0 0 18 18" preserveAspectRatio="none"><circle cx="9" cy="9" r="7.1" fill="none" stroke="#2a2a2a" stroke-width="1.5"/></svg>
<div class="t" style="left:478.03px;top:108.66px;font-size:11.5px;color:#232323;font-weight:400;transform:scaleX(0.9408);transform-origin:center 0;">Disabled</div>
<svg class="s" style="left:565.80px;top:83.00px;" width="18.00" height="18.00" viewBox="0 0 18 18" preserveAspectRatio="none"><circle cx="9" cy="9" r="7.1" fill="none" stroke="#2a2a2a" stroke-width="1.5"/><circle cx="9" cy="9" r="2.6" fill="#2a2a2a"/></svg>
<div class="t" style="left:541.87px;top:108.66px;font-size:11.5px;color:#3b5fb3;font-weight:400;transform:scaleX(0.9825);transform-origin:center 0;">Debug mode</div>
<svg class="s" style="left:762.00px;top:93.40px;" width="8.60" height="8.10" viewBox="0 0 10 10" preserveAspectRatio="none"><polygon points="0,10 10,0 10,10" fill="#3b5fb3"/></svg>
<div class="t" style="left:780.60px;top:92.65px;font-size:14px;color:#3b5fb3;font-weight:400;transform:scaleX(0.9908);transform-origin:left 0;">Details</div>
<div class="t" style="left:364.32px;top:140.36px;font-size:11.5px;color:#232323;font-weight:400;transform:scaleX(0.9518);transform-origin:right 0;">Name</div>
<div class="t" style="left:397.00px;top:139.69px;font-size:11px;color:#e02020;font-weight:400;">*</div>
<div class="r" style="left:409.40px;top:131.30px;width:479.30px;height:27.20px;background:#fff;border:1px solid #a9a9a9;border-radius:4px;"></div>
<div class="t" style="left:414.70px;top:140.66px;font-size:11.5px;color:#111;font-weight:400;transform:scaleX(0.9435);transform-origin:left 0;">Dynamic Flow Panel</div>
<div class="t" style="left:354.10px;top:179.56px;font-size:11.5px;color:#232323;font-weight:400;transform:scaleX(0.9437);transform-origin:right 0;">vDevice</div>
<div class="r" style="left:410.00px;top:170.00px;width:478.70px;height:28.00px;background:#fff;border-radius:4px;box-shadow:0 0 0 1px #ececf0;"></div>
<div class="t" style="left:416.70px;top:179.56px;font-size:11.5px;color:#3b5fb3;font-weight:400;transform:scaleX(0.9431);transform-origin:left 0;">Host</div>
<svg class="s" style="left:872.70px;top:182.00px;" width="9.10" height="6.00" viewBox="0 0 10 6" preserveAspectRatio="none"><path d="M0.8,0.8 L5,5 L9.2,0.8" fill="none" stroke="#777" stroke-width="1.4" stroke-linecap="round" stroke-linejoin="round"/></svg>
<div class="t" style="left:370.07px;top:219.46px;font-size:11.5px;color:#232323;font-weight:400;transform:scaleX(0.9265);transform-origin:right 0;">Type</div>
<div class="r" style="left:410.00px;top:210.00px;width:478.70px;height:28.00px;background:#fff;border-radius:4px;box-shadow:0 0 0 1px #ececf0;"></div>
<div class="t" style="left:416.70px;top:219.46px;font-size:11.5px;color:#3b5fb3;font-weight:400;transform:scaleX(0.8792);transform-origin:left 0;">HTTP</div>
<svg class="s" style="left:872.70px;top:222.00px;" width="9.10" height="6.00" viewBox="0 0 10 6" preserveAspectRatio="none"><path d="M0.8,0.8 L5,5 L9.2,0.8" fill="none" stroke="#777" stroke-width="1.4" stroke-linecap="round" stroke-linejoin="round"/></svg>
<div class="r" style="left:409.20px;top:260.00px;width:321.60px;height:23.80px;background:#c6c6ca;border-radius:4px;"></div>
<div class="r" style="left:734.00px;top:260.00px;width:71.90px;height:23.80px;background:#c6c6ca;border-radius:4px;"></div>
<div class="r" style="left:808.90px;top:260.00px;width:79.90px;height:23.80px;background:#c6c6ca;border-radius:4px;"></div>
<div class="t" style="left:539.95px;top:267.76px;font-size:11.5px;color:#333;font-weight:400;transform:scaleX(0.9702);transform-origin:center 0;">Frontend IP</div>
<div class="t" style="left:759.45px;top:267.76px;font-size:11.5px;color:#333;font-weight:400;transform:scaleX(0.9719);transform-origin:center 0;">Port</div>
<div class="t" style="left:838.43px;top:267.76px;font-size:11.5px;color:#333;font-weight:400;transform:scaleX(0.7959);transform-origin:center 0;">SSL</div>
<svg class="s" style="left:897.00px;top:267.30px;" width="10.20" height="10.20" viewBox="0 0 10 10" preserveAspectRatio="none"><circle cx="5" cy="5" r="5" fill="#3b5fb3"/><path d="M5,2.4 V7.6 M2.4,5 H7.6" stroke="#fff" stroke-width="1.6"/></svg>
<div class="r" style="left:409.20px;top:288.70px;width:321.60px;height:28.60px;background:#fff;border:1px solid #ababab;border-radius:4px;"></div>
<div class="r" style="left:734.00px;top:288.70px;width:71.90px;height:28.60px;background:#fff;border:1px solid #ababab;border-radius:4px;"></div>
<div class="r" style="left:808.90px;top:288.70px;width:79.90px;height:28.60px;background:#fff;border:1px solid #ababab;border-radius:4px;"></div>
<div class="t" style="left:416.60px;top:298.56px;font-size:11.5px;color:#232323;font-weight:400;transform:scaleX(0.9285);transform-origin:left 0;">INT</div>
<div class="t" style="left:445.90px;top:298.56px;font-size:11.5px;color:#3bb85a;font-weight:400;transform:scaleX(0.8421);transform-origin:left 0;">135.181.188.109</div>
<div class="t" style="left:656.40px;top:298.56px;font-size:11.5px;color:#232323;font-weight:400;transform:scaleX(0.9271);transform-origin:left 0;">@WAN</div>
<svg class="s" style="left:714.60px;top:300.80px;" width="9.40" height="6.20" viewBox="0 0 10 6" preserveAspectRatio="none"><path d="M0.8,0.8 L5,5 L9.2,0.8" fill="none" stroke="#333" stroke-width="1.6" stroke-linecap="round" stroke-linejoin="round"/></svg>
<div class="t" style="left:739.20px;top:298.56px;font-size:11.5px;color:#111;font-weight:400;transform:scaleX(0.9303);transform-origin:left 0;">8080</div>
<div class="t" style="left:818.40px;top:298.56px;font-size:11.5px;color:#111;font-weight:400;transform:scaleX(0.9434);transform-origin:left 0;">Redirect</div>
<svg class="s" style="left:875.60px;top:300.60px;" width="8.70" height="5.60" viewBox="0 0 10 6" preserveAspectRatio="none"><path d="M0.8,0.8 L5,5 L9.2,0.8" fill="none" stroke="#111" stroke-width="2.0" stroke-linecap="round" stroke-linejoin="round"/></svg>
<svg class="s" style="left:896.90px;top:298.50px;" width="8.80" height="10.00" viewBox="0 0 8.8 10" preserveAspectRatio="none"><g fill="#ee1d1d"><rect x="0" y="1.2" width="8.8" height="1.3"/><rect x="3" y="0" width="2.8" height="1.4"/><path d="M0.8,3 H8 L7.5,10 H1.3 Z"/></g><g stroke="#fff" stroke-width="0.75"><path d="M3,4.2 V8.8 M4.4,4.2 V8.8 M5.8,4.2 V8.8"/></g></svg>
<div class="r" style="left:409.20px;top:319.80px;width:321.60px;height:28.50px;background:#fff;border:1px solid #ababab;border-radius:4px;"></div>
<div class="r" style="left:734.00px;top:319.80px;width:71.90px;height:28.50px;background:#fff;border:1px solid #ababab;border-radius:4px;"></div>
<div class="r" style="left:808.90px;top:319.80px;width:79.90px;height:28.50px;background:#fff;border:1px solid #ababab;border-radius:4px;"></div>
<div class="t" style="left:416.60px;top:329.46px;font-size:11.5px;color:#232323;font-weight:400;transform:scaleX(0.9285);transform-origin:left 0;">INT</div>
<div class="t" style="left:445.90px;top:329.46px;font-size:11.5px;color:#3bb85a;font-weight:400;transform:scaleX(0.8421);transform-origin:left 0;">135.181.188.109</div>
<div class="t" style="left:656.40px;top:329.46px;font-size:11.5px;color:#232323;font-weight:400;transform:scaleX(0.9271);transform-origin:left 0;">@WAN</div>
<svg class="s" style="left:714.60px;top:331.70px;" width="9.40" height="6.20" viewBox="0 0 10 6" preserveAspectRatio="none"><path d="M0.8,0.8 L5,5 L9.2,0.8" fill="none" stroke="#333" stroke-width="1.6" stroke-linecap="round" stroke-linejoin="round"/></svg>
<div class="t" style="left:739.20px;top:329.46px;font-size:11.5px;color:#111;font-weight:400;transform:scaleX(0.9303);transform-origin:left 0;">4443</div>
<div class="t" style="left:818.40px;top:329.46px;font-size:11.5px;color:#111;font-weight:400;transform:scaleX(0.9645);transform-origin:left 0;">Terminate</div>
<svg class="s" style="left:875.60px;top:331.50px;" width="8.70" height="5.60" viewBox="0 0 10 6" preserveAspectRatio="none"><path d="M0.8,0.8 L5,5 L9.2,0.8" fill="none" stroke="#111" stroke-width="2.0" stroke-linecap="round" stroke-linejoin="round"/></svg>
<svg class="s" style="left:896.90px;top:329.40px;" width="8.80" height="10.00" viewBox="0 0 8.8 10" preserveAspectRatio="none"><g fill="#ee1d1d"><rect x="0" y="1.2" width="8.8" height="1.3"/><rect x="3" y="0" width="2.8" height="1.4"/><path d="M0.8,3 H8 L7.5,10 H1.3 Z"/></g><g stroke="#fff" stroke-width="0.75"><path d="M3,4.2 V8.8 M4.4,4.2 V8.8 M5.8,4.2 V8.8"/></g></svg>
<div class="t" style="left:343.03px;top:377.06px;font-size:11.5px;color:#232323;font-weight:400;transform:scaleX(0.9890);transform-origin:right 0;">Certificate</div>
<div class="r" style="left:409.50px;top:367.30px;width:479.20px;height:29.20px;background:#fff;border:1px solid #ababab;border-radius:4px;"></div>
<div class="r" style="left:413.40px;top:372.40px;width:221.90px;height:18.00px;background:#f6f6fa;border:1px solid #ededf2;border-radius:4px;"></div>
<div class="t" style="left:420.50px;top:376.86px;font-size:11.5px;color:#b27a2c;font-weight:400;">(cert-lvo4iyqj)</div>
<div class="r" style="left:617.00px;top:374.00px;width:1.00px;height:15.00px;background:#cfcfcf;"></div>
<svg class="s" style="left:623.00px;top:379.00px;" width="7.30" height="6.40" viewBox="0 0 8 7" preserveAspectRatio="none"><path d="M1,0.8 L7,6.2 M7,0.8 L1,6.2" stroke="#b27a2c" stroke-width="1.9" stroke-linecap="round"/></svg>
<svg class="s" style="left:872.60px;top:380.00px;" width="9.60" height="6.00" viewBox="0 0 10 6" preserveAspectRatio="none"><path d="M0.8,0.8 L5,5 L9.2,0.8" fill="none" stroke="#222" stroke-width="1.8" stroke-linecap="round" stroke-linejoin="round"/></svg>
<div class="r" style="left:409.20px;top:411.00px;width:187.10px;height:1.00px;background:#cdcdd2;"></div>
<div class="r" style="left:702.00px;top:411.00px;width:186.70px;height:1.00px;background:#cdcdd2;"></div>
<div class="r" style="left:596.30px;top:402.50px;width:105.70px;height:18.10px;background:#ebebf0;border-radius:4px;"></div>
<div class="t" style="left:604.00px;top:406.56px;font-size:11.5px;color:#3b5fb3;font-weight:400;transform:scaleX(0.9918);transform-origin:left 0;">↓Path = /admin</div>
<svg class="s" style="left:691.00px;top:409.00px;" width="9.50" height="6.00" viewBox="0 0 10 6" preserveAspectRatio="none"><path d="M0.8,5.2 L5,1 L9.2,5.2" fill="none" stroke="#3b5fb3" stroke-width="1.9" stroke-linecap="round" stroke-linejoin="round"/></svg>
<svg class="s" style="left:897.00px;top:411.00px;" width="8.80" height="10.00" viewBox="0 0 8.8 10" preserveAspectRatio="none"><g fill="#ee1d1d"><rect x="0" y="1.2" width="8.8" height="1.3"/><rect x="3" y="0" width="2.8" height="1.4"/><path d="M0.8,3 H8 L7.5,10 H1.3 Z"/></g><g stroke="#fff" stroke-width="0.75"><path d="M3,4.2 V8.8 M4.4,4.2 V8.8 M5.8,4.2 V8.8"/></g></svg>
<svg class="s" style="left:417.00px;top:456.60px;" width="11.00" height="11.00" viewBox="0 0 10 10" preserveAspectRatio="none"><circle cx="5" cy="5" r="5" fill="#3b5fb3"/><path d="M5,2.5 V7.5 M2.5,5 H7.5" stroke="#fff" stroke-width="1.5"/></svg>
<div class="t" style="left:432.50px;top:456.66px;font-size:11.5px;color:#3b5fb3;font-weight:400;transform:scaleX(0.9653);transform-origin:left 0;">Conditional backend services</div>
<div class="r" style="left:409.20px;top:474.40px;width:479.60px;height:23.20px;background:#c6c6ca;border-radius:4px;"></div>
<div class="t" style="left:584.76px;top:481.66px;font-size:11.5px;color:#333;font-weight:400;transform:scaleX(0.9612);transform-origin:center 0;">Default backend services</div>
<div class="r" style="left:409.50px;top:502.20px;width:479.20px;height:29.30px;background:#fff;border:1px solid #b9b9b9;border-radius:4px;"></div>
<div class="r" style="left:412.40px;top:506.50px;width:449.20px;height:21.00px;background:#fff;border:1px solid #e2e2e2;border-radius:4px;"></div>
<svg class="s" style="left:432.20px;top:511.10px;" width="11.60" height="11.60" viewBox="0 0 10 10" preserveAspectRatio="none"><circle cx="5" cy="5" r="5" fill="#2dbd4d"/></svg>
<div class="t" style="left:461.50px;top:512.76px;font-size:11.5px;color:#3b5fb3;font-weight:400;transform:scaleX(0.9710);transform-origin:left 0;">demobackend02.tr7.com</div>
<div class="t" style="left:666.10px;top:512.76px;font-size:11.5px;color:#3b5fb3;font-weight:400;transform:scaleX(0.8505);transform-origin:left 0;">10.10.10.51 : 80</div>
<svg class="s" style="left:815.20px;top:514.28px;" width="12.00" height="7.44" viewBox="0 0 12 7.4" preserveAspectRatio="none"><path d="M0.7,3.7 C2.5,0.9 4.2,0.6 6,0.6 C7.8,0.6 9.5,0.9 11.3,3.7 C9.5,6.5 7.8,6.8 6,6.8 C4.2,6.8 2.5,6.5 0.7,3.7 Z" fill="none" stroke="#3b5fb3" stroke-width="1.2"/><circle cx="6" cy="3.7" r="2.1" fill="#3b5fb3"/></svg>
<svg class="s" style="left:831.50px;top:512.40px;" width="12.40" height="10.30" viewBox="0 0 12.4 10.3" preserveAspectRatio="none"><path d="M8,1.8 H1.3 C0.9,1.8 0.7,2 0.7,2.4 V9 C0.7,9.4 0.9,9.6 1.3,9.6 H8.5 C8.9,9.6 9.1,9.4 9.1,9 V6" fill="none" stroke="#3b5fb3" stroke-width="1.3"/><path d="M4.5,7.5 L4.8,5.4 L10,0.4 L12,2.3 L6.7,7.3 Z" fill="#3b5fb3" stroke="#3b5fb3" stroke-width="0.3"/></svg>
<svg class="s" style="left:847.70px;top:514.00px;" width="8.10" height="7.60" viewBox="0 0 8 8" preserveAspectRatio="none"><path d="M1,1 L7,7 M7,1 L1,7" stroke="#3b5fb3" stroke-width="2" stroke-linecap="round"/></svg>
<svg class="s" style="left:872.40px;top:515.00px;" width="9.60" height="5.80" viewBox="0 0 10 6" preserveAspectRatio="none"><path d="M0.8,0.8 L5,5 L9.2,0.8" fill="none" stroke="#222" stroke-width="1.8" stroke-linecap="round" stroke-linejoin="round"/></svg>
<div class="r" style="left:771.10px;top:579.00px;width:71.80px;height:29.70px;background:#3a64b4;border:1px solid #3b2f55;border-radius:4px;"></div>
<svg class="s" style="left:785.50px;top:587.10px;" width="14.70" height="13.90" viewBox="0 0 14.7 13.9" preserveAspectRatio="none"><g fill="none" stroke="#eef" stroke-width="1.5"><path d="M0.8,0.8 H10.5 L13.9,4.2 V13.1 H0.8 Z"/><path d="M3.5,0.8 V4.2 H9.5 V0.8"/><circle cx="7.2" cy="9" r="1.9"/></g></svg>
<div class="t" style="left:807.00px;top:588.49px;font-size:13px;color:#fff;font-weight:400;-webkit-text-stroke:0.58px #fff;transform:scaleX(0.8437);transform-origin:left 0;">Save</div>
<div class="t" style="left:1143.60px;top:55.85px;font-size:14px;color:#3b5fb3;font-weight:400;transform:scaleX(0.9885);transform-origin:center 0;">Details</div>
<div class="r" style="left:943.00px;top:85.20px;width:443.00px;height:30.50px;border-bottom:1.6px solid #e3e3e6;border-radius:5px;"></div>
<svg class="s" style="left:948.00px;top:92.90px;" width="13.00" height="13.00" viewBox="0 0 13 13" preserveAspectRatio="none"><rect x="0" y="0" width="13" height="13" rx="2.2" fill="#ff8a00"/><path d="M2.7,6.8 L5.2,9.5 L10.3,3.4" fill="none" stroke="#2b2f3a" stroke-width="2.1"/></svg>
<div class="t" style="left:969.60px;top:93.82px;font-size:12.5px;color:#262626;font-weight:400;transform:scaleX(0.9664);transform-origin:left 0;">Debug</div>
<svg class="s" style="left:1370.30px;top:95.00px;" width="5.00" height="7.30" viewBox="0 0 5 7.3" preserveAspectRatio="none"><polygon points="0,0 5,3.65 0,7.3" fill="#777"/></svg>
<div class="r" style="left:943.00px;top:124.20px;width:443.00px;height:30.50px;border-bottom:1.6px solid #e3e3e6;border-radius:5px;"></div>
<svg class="s" style="left:948.00px;top:131.90px;" width="13.00" height="13.00" viewBox="0 0 13 13" preserveAspectRatio="none"><rect x="0" y="0" width="13" height="13" rx="2.2" fill="#cdcdcd"/><path d="M2.6,6.9 L5.1,9.6 L10.4,3.3" fill="none" stroke="#f2f2f2" stroke-width="1.9"/></svg>
<div class="t" style="left:969.60px;top:132.82px;font-size:12.5px;color:#262626;font-weight:400;transform:scaleX(0.9155);transform-origin:left 0;">WAF</div>
<div class="r" style="left:943.00px;top:163.20px;width:443.00px;height:30.50px;border-bottom:1.6px solid #e3e3e6;border-radius:5px;"></div>
<svg class="s" style="left:948.00px;top:170.90px;" width="13.00" height="13.00" viewBox="0 0 13 13" preserveAspectRatio="none"><rect x="0" y="0" width="13" height="13" rx="2.2" fill="#ff8a00"/><path d="M2.7,6.8 L5.2,9.5 L10.3,3.4" fill="none" stroke="#2b2f3a" stroke-width="2.1"/></svg>
<div class="t" style="left:969.60px;top:171.82px;font-size:12.5px;color:#262626;font-weight:400;transform:scaleX(0.8880);transform-origin:left 0;">L7 DDOS</div>
<svg class="s" style="left:1370.30px;top:173.00px;" width="5.00" height="7.30" viewBox="0 0 5 7.3" preserveAspectRatio="none"><polygon points="0,0 5,3.65 0,7.3" fill="#777"/></svg>
<div class="r" style="left:1183.50px;top:168.10px;width:175.00px;height:17.30px;background:#f8f8fb;border-radius:5px;box-shadow:0 0 0 1px #efeff3;"></div>
<div class="r" style="left:1336.30px;top:169.10px;width:1.20px;height:15.30px;background:#c9c9cf;"></div>
<div class="t" style="left:1190.40px;top:171.82px;font-size:12.5px;color:#3b5fb3;font-weight:400;">Default</div>
<svg class="s" style="left:1341.80px;top:174.83px;" width="11.20" height="6.94" viewBox="0 0 12 7.4" preserveAspectRatio="none"><path d="M0.7,3.7 C2.5,0.9 4.2,0.6 6,0.6 C7.8,0.6 9.5,0.9 11.3,3.7 C9.5,6.5 7.8,6.8 6,6.8 C4.2,6.8 2.5,6.5 0.7,3.7 Z" fill="none" stroke="#3b5fb3" stroke-width="1.2"/><circle cx="6" cy="3.7" r="2.1" fill="#3b5fb3"/></svg>
<div class="r" style="left:943.00px;top:202.20px;width:443.00px;height:30.50px;border-bottom:1.6px solid #e3e3e6;border-radius:5px;"></div>
<svg class="s" style="left:948.00px;top:209.90px;" width="13.00" height="13.00" viewBox="0 0 13 13" preserveAspectRatio="none"><rect x="0" y="0" width="13" height="13" rx="2.2" fill="#ff8a00"/><path d="M2.7,6.8 L5.2,9.5 L10.3,3.4" fill="none" stroke="#2b2f3a" stroke-width="2.1"/></svg>
<div class="t" style="left:969.60px;top:210.82px;font-size:12.5px;color:#262626;font-weight:400;transform:scaleX(0.8828);transform-origin:left 0;">Cache</div>
<svg class="s" style="left:1370.30px;top:212.00px;" width="5.00" height="7.30" viewBox="0 0 5 7.3" preserveAspectRatio="none"><polygon points="0,0 5,3.65 0,7.3" fill="#777"/></svg>
<div class="r" style="left:1183.50px;top:207.10px;width:175.00px;height:17.30px;background:#f8f8fb;border-radius:5px;box-shadow:0 0 0 1px #efeff3;"></div>
<div class="r" style="left:1336.30px;top:208.10px;width:1.20px;height:15.30px;background:#c9c9cf;"></div>
<div class="t" style="left:1190.40px;top:210.82px;font-size:12.5px;color:#3b5fb3;font-weight:400;">Default</div>
<svg class="s" style="left:1341.80px;top:213.83px;" width="11.20" height="6.94" viewBox="0 0 12 7.4" preserveAspectRatio="none"><path d="M0.7,3.7 C2.5,0.9 4.2,0.6 6,0.6 C7.8,0.6 9.5,0.9 11.3,3.7 C9.5,6.5 7.8,6.8 6,6.8 C4.2,6.8 2.5,6.5 0.7,3.7 Z" fill="none" stroke="#3b5fb3" stroke-width="1.2"/><circle cx="6" cy="3.7" r="2.1" fill="#3b5fb3"/></svg>
<div class="r" style="left:943.00px;top:241.20px;width:443.00px;height:30.50px;border-bottom:1.6px solid #e3e3e6;border-radius:5px;"></div>
<svg class="s" style="left:948.00px;top:248.90px;" width="13.00" height="13.00" viewBox="0 0 13 13" preserveAspectRatio="none"><rect x="0" y="0" width="13" height="13" rx="2.2" fill="#ff8a00"/><path d="M2.7,6.8 L5.2,9.5 L10.3,3.4" fill="none" stroke="#2b2f3a" stroke-width="2.1"/></svg>
<div class="t" style="left:969.60px;top:249.82px;font-size:12.5px;color:#262626;font-weight:400;transform:scaleX(0.9505);transform-origin:left 0;">Compression</div>
<svg class="s" style="left:1370.30px;top:251.00px;" width="5.00" height="7.30" viewBox="0 0 5 7.3" preserveAspectRatio="none"><polygon points="0,0 5,3.65 0,7.3" fill="#777"/></svg>
<div class="r" style="left:1183.50px;top:246.10px;width:175.00px;height:17.30px;background:#f8f8fb;border-radius:5px;box-shadow:0 0 0 1px #efeff3;"></div>
<div class="r" style="left:1336.30px;top:247.10px;width:1.20px;height:15.30px;background:#c9c9cf;"></div>
<div class="t" style="left:1190.40px;top:249.82px;font-size:12.5px;color:#3b5fb3;font-weight:400;">Default</div>
<svg class="s" style="left:1341.80px;top:252.83px;" width="11.20" height="6.94" viewBox="0 0 12 7.4" preserveAspectRatio="none"><path d="M0.7,3.7 C2.5,0.9 4.2,0.6 6,0.6 C7.8,0.6 9.5,0.9 11.3,3.7 C9.5,6.5 7.8,6.8 6,6.8 C4.2,6.8 2.5,6.5 0.7,3.7 Z" fill="none" stroke="#3b5fb3" stroke-width="1.2"/><circle cx="6" cy="3.7" r="2.1" fill="#3b5fb3"/></svg>
<div class="r" style="left:943.00px;top:280.20px;width:443.00px;height:30.50px;border-bottom:1.6px solid #e3e3e6;border-radius:5px;"></div>
<svg class="s" style="left:948.00px;top:287.90px;" width="13.00" height="13.00" viewBox="0 0 13 13" preserveAspectRatio="none"><rect x="0" y="0" width="13" height="13" rx="2.2" fill="#ff8a00"/><path d="M2.7,6.8 L5.2,9.5 L10.3,3.4" fill="none" stroke="#2b2f3a" stroke-width="2.1"/></svg>
<div class="t" style="left:969.60px;top:288.82px;font-size:12.5px;color:#262626;font-weight:400;transform:scaleX(0.9758);transform-origin:left 0;">Actions</div>
<svg class="s" style="left:1370.30px;top:290.00px;" width="5.00" height="7.30" viewBox="0 0 5 7.3" preserveAspectRatio="none"><polygon points="0,0 5,3.65 0,7.3" fill="#777"/></svg>
<div class="r" style="left:1183.20px;top:285.10px;width:174.80px;height:17.30px;background:#f8f8fb;border-radius:5px;box-shadow:0 0 0 1px #efeff3;"></div>
<div class="r" style="left:1352.90px;top:286.10px;width:1.20px;height:15.30px;background:#c9c9cf;"></div>
<div class="t" style="left:1190.10px;top:288.82px;font-size:12.5px;color:#3b5fb3;font-weight:400;transform:scaleX(0.9837);transform-origin:left 0;">Total of 2</div>
<div class="r" style="left:943.00px;top:319.20px;width:443.00px;height:30.50px;border-bottom:1.6px solid #e3e3e6;border-radius:5px;"></div>
<svg class="s" style="left:948.00px;top:326.90px;" width="13.00" height="13.00" viewBox="0 0 13 13" preserveAspectRatio="none"><rect x="0" y="0" width="13" height="13" rx="2.2" fill="#ff8a00"/><path d="M2.7,6.8 L5.2,9.5 L10.3,3.4" fill="none" stroke="#2b2f3a" stroke-width="2.1"/></svg>
<div class="t" style="left:969.60px;top:327.82px;font-size:12.5px;color:#262626;font-weight:400;transform:scaleX(0.9730);transform-origin:left 0;">X-Forwarded-For</div>
<div class="r" style="left:943.00px;top:358.20px;width:443.00px;height:30.50px;border-bottom:1.6px solid #e3e3e6;border-radius:5px;"></div>
<svg class="s" style="left:948.00px;top:365.90px;" width="13.00" height="13.00" viewBox="0 0 13 13" preserveAspectRatio="none"><rect x="0" y="0" width="13" height="13" rx="2.2" fill="#ff8a00"/><path d="M2.7,6.8 L5.2,9.5 L10.3,3.4" fill="none" stroke="#2b2f3a" stroke-width="2.1"/></svg>
<div class="t" style="left:969.60px;top:366.82px;font-size:12.5px;color:#262626;font-weight:400;transform:scaleX(0.8524);transform-origin:left 0;">LOG</div>
<svg class="s" style="left:1370.30px;top:368.00px;" width="5.00" height="7.30" viewBox="0 0 5 7.3" preserveAspectRatio="none"><polygon points="0,0 5,3.65 0,7.3" fill="#777"/></svg>
<div class="r" style="left:1183.50px;top:363.10px;width:175.00px;height:17.30px;background:#f8f8fb;border-radius:5px;box-shadow:0 0 0 1px #efeff3;"></div>
<div class="r" style="left:1336.30px;top:364.10px;width:1.20px;height:15.30px;background:#c9c9cf;"></div>
<div class="t" style="left:1190.40px;top:366.82px;font-size:12.5px;color:#3b5fb3;font-weight:400;transform:scaleX(0.9728);transform-origin:left 0;">Stream log</div>
<svg class="s" style="left:1341.80px;top:369.83px;" width="11.20" height="6.94" viewBox="0 0 12 7.4" preserveAspectRatio="none"><path d="M0.7,3.7 C2.5,0.9 4.2,0.6 6,0.6 C7.8,0.6 9.5,0.9 11.3,3.7 C9.5,6.5 7.8,6.8 6,6.8 C4.2,6.8 2.5,6.5 0.7,3.7 Z" fill="none" stroke="#3b5fb3" stroke-width="1.2"/><circle cx="6" cy="3.7" r="2.1" fill="#3b5fb3"/></svg>
<div class="r" style="left:943.00px;top:397.20px;width:443.00px;height:30.50px;border-bottom:1.6px solid #e3e3e6;border-radius:5px;"></div>
<svg class="s" style="left:948.00px;top:404.90px;" width="13.00" height="13.00" viewBox="0 0 13 13" preserveAspectRatio="none"><rect x="0" y="0" width="13" height="13" rx="2.2" fill="#ff8a00"/><path d="M2.7,6.8 L5.2,9.5 L10.3,3.4" fill="none" stroke="#2b2f3a" stroke-width="2.1"/></svg>
<div class="t" style="left:969.60px;top:405.82px;font-size:12.5px;color:#262626;font-weight:400;transform:scaleX(0.9182);transform-origin:left 0;">SSL security</div>
<svg class="s" style="left:1370.30px;top:407.00px;" width="5.00" height="7.30" viewBox="0 0 5 7.3" preserveAspectRatio="none"><polygon points="0,0 5,3.65 0,7.3" fill="#777"/></svg>
<div class="r" style="left:1183.50px;top:402.10px;width:175.00px;height:17.30px;background:#f8f8fb;border-radius:5px;box-shadow:0 0 0 1px #efeff3;"></div>
<div class="r" style="left:1336.30px;top:403.10px;width:1.20px;height:15.30px;background:#c9c9cf;"></div>
<div class="t" style="left:1190.40px;top:405.82px;font-size:12.5px;color:#3b5fb3;font-weight:400;">Default</div>
<svg class="s" style="left:1341.80px;top:408.83px;" width="11.20" height="6.94" viewBox="0 0 12 7.4" preserveAspectRatio="none"><path d="M0.7,3.7 C2.5,0.9 4.2,0.6 6,0.6 C7.8,0.6 9.5,0.9 11.3,3.7 C9.5,6.5 7.8,6.8 6,6.8 C4.2,6.8 2.5,6.5 0.7,3.7 Z" fill="none" stroke="#3b5fb3" stroke-width="1.2"/><circle cx="6" cy="3.7" r="2.1" fill="#3b5fb3"/></svg>
<div class="r" style="left:943.00px;top:436.20px;width:443.00px;height:30.50px;border-bottom:1.6px solid #e3e3e6;border-radius:5px;"></div>
<svg class="s" style="left:948.00px;top:443.90px;" width="13.00" height="13.00" viewBox="0 0 13 13" preserveAspectRatio="none"><rect x="0" y="0" width="13" height="13" rx="2.2" fill="#ff8a00"/><path d="M2.7,6.8 L5.2,9.5 L10.3,3.4" fill="none" stroke="#2b2f3a" stroke-width="2.1"/></svg>
<div class="t" style="left:969.60px;top:444.82px;font-size:12.5px;color:#262626;font-weight:400;transform:scaleX(1.0350);transform-origin:left 0;">Notification</div>
<svg class="s" style="left:1370.30px;top:446.00px;" width="5.00" height="7.30" viewBox="0 0 5 7.3" preserveAspectRatio="none"><polygon points="0,0 5,3.65 0,7.3" fill="#777"/></svg>
<div class="r" style="left:1183.50px;top:441.10px;width:175.00px;height:17.30px;background:#f8f8fb;border-radius:5px;box-shadow:0 0 0 1px #efeff3;"></div>
<div class="r" style="left:1336.30px;top:442.10px;width:1.20px;height:15.30px;background:#c9c9cf;"></div>
<div class="t" style="left:1190.40px;top:444.82px;font-size:12.5px;color:#3b5fb3;font-weight:400;">Default</div>
<svg class="s" style="left:1341.80px;top:447.83px;" width="11.20" height="6.94" viewBox="0 0 12 7.4" preserveAspectRatio="none"><path d="M0.7,3.7 C2.5,0.9 4.2,0.6 6,0.6 C7.8,0.6 9.5,0.9 11.3,3.7 C9.5,6.5 7.8,6.8 6,6.8 C4.2,6.8 2.5,6.5 0.7,3.7 Z" fill="none" stroke="#3b5fb3" stroke-width="1.2"/><circle cx="6" cy="3.7" r="2.1" fill="#3b5fb3"/></svg>
<div class="r" style="left:943.00px;top:475.20px;width:443.00px;height:30.50px;border-bottom:1.6px solid #e3e3e6;border-radius:5px;"></div>
<svg class="s" style="left:948.00px;top:482.90px;" width="13.00" height="13.00" viewBox="0 0 13 13" preserveAspectRatio="none"><rect x="0" y="0" width="13" height="13" rx="2.2" fill="#ff8a00"/><path d="M2.7,6.8 L5.2,9.5 L10.3,3.4" fill="none" stroke="#2b2f3a" stroke-width="2.1"/></svg>
<div class="t" style="left:969.60px;top:483.82px;font-size:12.5px;color:#262626;font-weight:400;transform:scaleX(0.9808);transform-origin:left 0;">Report</div>
<svg class="s" style="left:1370.30px;top:485.00px;" width="5.00" height="7.30" viewBox="0 0 5 7.3" preserveAspectRatio="none"><polygon points="0,0 5,3.65 0,7.3" fill="#777"/></svg>
<div class="r" style="left:1183.50px;top:480.10px;width:175.00px;height:17.30px;background:#f8f8fb;border-radius:5px;box-shadow:0 0 0 1px #efeff3;"></div>
<div class="r" style="left:1336.30px;top:481.10px;width:1.20px;height:15.30px;background:#c9c9cf;"></div>
<div class="t" style="left:1190.40px;top:483.82px;font-size:12.5px;color:#3b5fb3;font-weight:400;">Default</div>
<svg class="s" style="left:1341.80px;top:486.83px;" width="11.20" height="6.94" viewBox="0 0 12 7.4" preserveAspectRatio="none"><path d="M0.7,3.7 C2.5,0.9 4.2,0.6 6,0.6 C7.8,0.6 9.5,0.9 11.3,3.7 C9.5,6.5 7.8,6.8 6,6.8 C4.2,6.8 2.5,6.5 0.7,3.7 Z" fill="none" stroke="#3b5fb3" stroke-width="1.2"/><circle cx="6" cy="3.7" r="2.1" fill="#3b5fb3"/></svg>
<div class="r" style="left:943.00px;top:514.20px;width:443.00px;height:30.50px;border-bottom:1.6px solid #e3e3e6;border-radius:5px;"></div>
<svg class="s" style="left:948.00px;top:521.90px;" width="13.00" height="13.00" viewBox="0 0 13 13" preserveAspectRatio="none"><rect x="0" y="0" width="13" height="13" rx="2.2" fill="#cdcdcd"/><path d="M2.6,6.9 L5.1,9.6 L10.4,3.3" fill="none" stroke="#f2f2f2" stroke-width="1.9"/></svg>
<div class="t" style="left:969.60px;top:522.82px;font-size:12.5px;color:#262626;font-weight:400;transform:scaleX(0.8638);transform-origin:left 0;">QOS</div>
<svg class="s" style="left:1370.30px;top:524.00px;" width="5.00" height="7.30" viewBox="0 0 5 7.3" preserveAspectRatio="none"><polygon points="0,0 5,3.65 0,7.3" fill="#777"/></svg>
<div class="r" style="left:943.00px;top:553.20px;width:443.00px;height:30.50px;border-bottom:1.6px solid #e3e3e6;border-radius:5px;"></div>
<svg class="s" style="left:948.00px;top:560.90px;" width="13.00" height="13.00" viewBox="0 0 13 13" preserveAspectRatio="none"><rect x="0" y="0" width="13" height="13" rx="2.2" fill="#ff8a00"/><path d="M2.7,6.8 L5.2,9.5 L10.3,3.4" fill="none" stroke="#2b2f3a" stroke-width="2.1"/></svg>
<div class="t" style="left:969.60px;top:561.82px;font-size:12.5px;color:#262626;font-weight:400;">Bandwidth</div>
<svg class="s" style="left:1370.30px;top:563.00px;" width="5.00" height="7.30" viewBox="0 0 5 7.3" preserveAspectRatio="none"><polygon points="0,0 5,3.65 0,7.3" fill="#777"/></svg>
<div class="r" style="left:943.00px;top:592.20px;width:443.00px;height:30.50px;border-bottom:1.6px solid #e3e3e6;border-radius:5px;"></div>
<svg class="s" style="left:948.00px;top:599.90px;" width="13.00" height="13.00" viewBox="0 0 13 13" preserveAspectRatio="none"><rect x="0" y="0" width="13" height="13" rx="2.2" fill="#ff8a00"/><path d="M2.7,6.8 L5.2,9.5 L10.3,3.4" fill="none" stroke="#2b2f3a" stroke-width="2.1"/></svg>
<div class="t" style="left:969.60px;top:600.82px;font-size:12.5px;color:#262626;font-weight:400;transform:scaleX(0.9728);transform-origin:left 0;">vService limits</div>
<svg class="s" style="left:1370.30px;top:602.00px;" width="5.00" height="7.30" viewBox="0 0 5 7.3" preserveAspectRatio="none"><polygon points="0,0 5,3.65 0,7.3" fill="#777"/></svg>
<div class="r" style="left:1183.30px;top:597.10px;width:175.10px;height:17.30px;background:#f8f8fb;border-radius:5px;box-shadow:0 0 0 1px #efeff3;"></div>
<div class="r" style="left:1318.90px;top:598.10px;width:1.20px;height:15.30px;background:#c9c9cf;"></div>
<div class="t" style="left:1190.20px;top:600.82px;font-size:12.5px;color:#3b5fb3;font-weight:400;transform:scaleX(0.9117);transform-origin:left 0;">Test</div>
<svg class="s" style="left:1324.70px;top:603.83px;" width="11.20" height="6.94" viewBox="0 0 12 7.4" preserveAspectRatio="none"><path d="M0.7,3.7 C2.5,0.9 4.2,0.6 6,0.6 C7.8,0.6 9.5,0.9 11.3,3.7 C9.5,6.5 7.8,6.8 6,6.8 C4.2,6.8 2.5,6.5 0.7,3.7 Z" fill="none" stroke="#3b5fb3" stroke-width="1.2"/><circle cx="6" cy="3.7" r="2.1" fill="#3b5fb3"/></svg>
<svg class="s" style="left:1341.70px;top:600.70px;" width="11.40" height="10.00" viewBox="0 0 12.4 10.3" preserveAspectRatio="none"><path d="M8,1.8 H1.3 C0.9,1.8 0.7,2 0.7,2.4 V9 C0.7,9.4 0.9,9.6 1.3,9.6 H8.5 C8.9,9.6 9.1,9.4 9.1,9 V6" fill="none" stroke="#3b5fb3" stroke-width="1.3"/><path d="M4.5,7.5 L4.8,5.4 L10,0.4 L12,2.3 L6.7,7.3 Z" fill="none" stroke="#3b5fb3" stroke-width="1.1"/></svg>
<div class="r" style="left:943.00px;top:631.20px;width:443.00px;height:30.50px;border-bottom:1.6px solid #e3e3e6;border-radius:5px;"></div>
<svg class="s" style="left:948.00px;top:638.90px;" width="13.00" height="13.00" viewBox="0 0 13 13" preserveAspectRatio="none"><rect x="0" y="0" width="13" height="13" rx="2.2" fill="#ff8a00"/><path d="M2.7,6.8 L5.2,9.5 L10.3,3.4" fill="none" stroke="#2b2f3a" stroke-width="2.1"/></svg>
<div class="t" style="left:969.60px;top:639.82px;font-size:12.5px;color:#262626;font-weight:400;transform:scaleX(0.9912);transform-origin:left 0;">Timeout</div>
<svg class="s" style="left:1370.30px;top:641.00px;" width="5.00" height="7.30" viewBox="0 0 5 7.3" preserveAspectRatio="none"><polygon points="0,0 5,3.65 0,7.3" fill="#777"/></svg>
<div class="r" style="left:1183.30px;top:636.10px;width:175.10px;height:17.30px;background:#f8f8fb;border-radius:5px;box-shadow:0 0 0 1px #efeff3;"></div>
<div class="r" style="left:1318.90px;top:637.10px;width:1.20px;height:15.30px;background:#c9c9cf;"></div>
<div class="t" style="left:1190.20px;top:639.82px;font-size:12.5px;color:#3b5fb3;font-weight:400;transform:scaleX(0.9117);transform-origin:left 0;">Test</div>
<svg class="s" style="left:1324.70px;top:642.83px;" width="11.20" height="6.94" viewBox="0 0 12 7.4" preserveAspectRatio="none"><path d="M0.7,3.7 C2.5,0.9 4.2,0.6 6,0.6 C7.8,0.6 9.5,0.9 11.3,3.7 C9.5,6.5 7.8,6.8 6,6.8 C4.2,6.8 2.5,6.5 0.7,3.7 Z" fill="none" stroke="#3b5fb3" stroke-width="1.2"/><circle cx="6" cy="3.7" r="2.1" fill="#3b5fb3"/></svg>
<svg class="s" style="left:1341.70px;top:639.70px;" width="11.40" height="10.00" viewBox="0 0 12.4 10.3" preserveAspectRatio="none"><path d="M8,1.8 H1.3 C0.9,1.8 0.7,2 0.7,2.4 V9 C0.7,9.4 0.9,9.6 1.3,9.6 H8.5 C8.9,9.6 9.1,9.4 9.1,9 V6" fill="none" stroke="#3b5fb3" stroke-width="1.3"/><path d="M4.5,7.5 L4.8,5.4 L10,0.4 L12,2.3 L6.7,7.3 Z" fill="none" stroke="#3b5fb3" stroke-width="1.1"/></svg>
<div class="r" style="left:943.00px;top:670.20px;width:443.00px;height:30.50px;border-bottom:1.6px solid #e3e3e6;border-radius:5px;"></div>
<svg class="s" style="left:948.00px;top:677.90px;" width="13.00" height="13.00" viewBox="0 0 13 13" preserveAspectRatio="none"><rect x="0" y="0" width="13" height="13" rx="2.2" fill="#ff8a00"/><path d="M2.7,6.8 L5.2,9.5 L10.3,3.4" fill="none" stroke="#2b2f3a" stroke-width="2.1"/></svg>
<div class="t" style="left:969.60px;top:678.82px;font-size:12.5px;color:#262626;font-weight:400;transform:scaleX(0.9847);transform-origin:left 0;">LB algorithm</div>
<svg class="s" style="left:1370.30px;top:680.00px;" width="5.00" height="7.30" viewBox="0 0 5 7.3" preserveAspectRatio="none"><polygon points="0,0 5,3.65 0,7.3" fill="#777"/></svg>
<div class="r" style="left:1166.30px;top:675.10px;width:175.20px;height:17.30px;background:#f8f8fb;border-radius:5px;box-shadow:0 0 0 1px #efeff3;"></div>
<div class="r" style="left:1318.90px;top:676.10px;width:1.20px;height:15.30px;background:#c9c9cf;"></div>
<div class="t" style="left:1173.20px;top:678.82px;font-size:12.5px;color:#3b5fb3;font-weight:400;transform:scaleX(0.9507);transform-origin:left 0;">Least Connection</div>
<svg class="s" style="left:1324.70px;top:681.83px;" width="11.20" height="6.94" viewBox="0 0 12 7.4" preserveAspectRatio="none"><path d="M0.7,3.7 C2.5,0.9 4.2,0.6 6,0.6 C7.8,0.6 9.5,0.9 11.3,3.7 C9.5,6.5 7.8,6.8 6,6.8 C4.2,6.8 2.5,6.5 0.7,3.7 Z" fill="none" stroke="#3b5fb3" stroke-width="1.2"/><circle cx="6" cy="3.7" r="2.1" fill="#3b5fb3"/></svg>
<svg class="s" style="left:1347.60px;top:678.40px;" width="9.80" height="11.40" viewBox="0 0 10 12" preserveAspectRatio="none"><path d="M0.8,0 H9.2 V1.8 H7.6 L7.9,4.6 C9.3,5.4 9.9,6.4 9.9,7.4 H0.1 C0.1,6.4 0.7,5.4 2.1,4.6 L2.4,1.8 H0.8 Z" fill="#3b5fb3"/><rect x="4.2" y="7.2" width="1.6" height="4.8" fill="#3b5fb3"/></svg>
<svg class="s" style="left:1655.20px;top:37.60px;" width="4.00" height="83.90" viewBox="0 0 4 83.90" preserveAspectRatio="none"><line x1="2" y1="0" x2="2" y2="83.90" stroke="#7fd890" stroke-width="1.8" stroke-dasharray="4.5,2.8"/></svg>
<svg class="s" style="left:1655.20px;top:178.00px;" width="4.00" height="8.00" viewBox="0 0 4 8.00" preserveAspectRatio="none"><line x1="2" y1="0" x2="2" y2="8.00" stroke="#7fd890" stroke-width="1.8" stroke-dasharray="4.5,2.8"/></svg>
<svg class="s" style="left:1655.20px;top:238.00px;" width="4.00" height="7.00" viewBox="0 0 4 7.00" preserveAspectRatio="none"><line x1="2" y1="0" x2="2" y2="7.00" stroke="#7fd890" stroke-width="1.8" stroke-dasharray="4.5,2.8"/></svg>
<svg class="s" style="left:1655.20px;top:297.00px;" width="4.00" height="13.00" viewBox="0 0 4 13.00" preserveAspectRatio="none"><line x1="2" y1="0" x2="2" y2="13.00" stroke="#7fd890" stroke-width="1.8" stroke-dasharray="4.5,2.8"/></svg>
<svg class="s" style="left:1655.20px;top:441.00px;" width="4.00" height="11.50" viewBox="0 0 4 11.50" preserveAspectRatio="none"><line x1="2" y1="0" x2="2" y2="11.50" stroke="#7fd890" stroke-width="1.8" stroke-dasharray="4.5,2.8"/></svg>
<svg class="s" style="left:1655.20px;top:473.40px;" width="4.00" height="5.90" viewBox="0 0 4 5.90" preserveAspectRatio="none"><line x1="2" y1="0" x2="2" y2="5.90" stroke="#7fd890" stroke-width="1.8" stroke-dasharray="4.5,2.8"/></svg>
<svg class="s" style="left:1655.20px;top:500.50px;" width="4.00" height="27.70" viewBox="0 0 4 27.70" preserveAspectRatio="none"><line x1="2" y1="0" x2="2" y2="27.70" stroke="#7fd890" stroke-width="1.8" stroke-dasharray="4.5,2.8"/></svg>
<svg class="s" style="left:1655.20px;top:579.80px;" width="4.00" height="6.60" viewBox="0 0 4 6.60" preserveAspectRatio="none"><line x1="2" y1="0" x2="2" y2="6.60" stroke="#7fd890" stroke-width="1.8" stroke-dasharray="4.5,2.8"/></svg>
<svg class="s" style="left:1655.20px;top:605.70px;" width="4.00" height="3.30" viewBox="0 0 4 3.30" preserveAspectRatio="none"><line x1="2" y1="0" x2="2" y2="3.30" stroke="#7fd890" stroke-width="1.8" stroke-dasharray="4.5,2.8"/></svg>
<svg class="s" style="left:1655.20px;top:628.70px;" width="4.00" height="7.80" viewBox="0 0 4 7.80" preserveAspectRatio="none"><line x1="2" y1="0" x2="2" y2="7.80" stroke="#7fd890" stroke-width="1.8" stroke-dasharray="4.5,2.8"/></svg>
<div class="r" style="left:1602.20px;top:14.20px;width:109.50px;height:23.40px;background:#3a63b0;border-radius:6px;"></div>
<div class="t" style="left:1644.15px;top:22.13px;font-size:10px;color:#fff;font-weight:700;transform:scaleX(0.9384);transform-origin:center 0;">HTTP</div>
<svg class="s" style="left:1719.00px;top:19.30px;" width="16.00" height="15.30" viewBox="0 0 16 15.3" preserveAspectRatio="none"><circle cx="6.3" cy="6.3" r="4.9" fill="none" stroke="#3a63b0" stroke-width="2.3"/><line x1="10" y1="10" x2="14.8" y2="14.5" stroke="#3a63b0" stroke-width="2.6" stroke-linecap="round"/></svg>
<svg class="s" style="left:1510.20px;top:44.40px;" width="10.20" height="9.80" viewBox="0 0 10.2 9.8" preserveAspectRatio="none"><path d="M5.9,1.3 A3.75,3.75 0 1 0 8.8,6.4" fill="none" stroke="#111" stroke-width="1.55"/><polygon points="5.4,-0.3 10,1.8 5.6,4.2" fill="#111"/></svg>
<div class="t" style="left:1524.20px;top:44.83px;font-size:10px;color:#3cc05e;font-weight:400;-webkit-text-stroke:0.45px #3cc05e;transform:scaleX(0.9051);transform-origin:left 0;">135.181.188.109:8080</div>
<div class="t" style="left:1523.80px;top:60.63px;font-size:10px;color:#3cc05e;font-weight:400;-webkit-text-stroke:0.45px #3cc05e;transform:scaleX(0.9091);transform-origin:left 0;">135.181.188.109:4443</div>
<svg class="s" style="left:1619.30px;top:46.75px;" width="37.90" height="4.00" viewBox="0 0 37.90 4" preserveAspectRatio="none"><line x1="0" y1="2" x2="37.90" y2="2" stroke="#7fd890" stroke-width="1.8" stroke-dasharray="5.5,3"/></svg>
<svg class="s" style="left:1619.30px;top:62.80px;" width="8.70" height="4.00" viewBox="0 0 8.70 4" preserveAspectRatio="none"><line x1="0" y1="2" x2="8.70" y2="2" stroke="#7fd890" stroke-width="1.8" stroke-dasharray="5.5,3"/></svg>
<svg class="s" style="left:1647.80px;top:62.80px;" width="9.40" height="4.00" viewBox="0 0 9.40 4" preserveAspectRatio="none"><line x1="0" y1="2" x2="9.40" y2="2" stroke="#7fd890" stroke-width="1.8" stroke-dasharray="5.5,3"/></svg>
<div class="r" style="left:1654.20px;top:47.90px;width:3.80px;height:1.70px;background:#7fd890;"></div>
<div class="r" style="left:1628.00px;top:58.00px;width:19.80px;height:13.80px;background:#4a4a4a;border-radius:3.5px;"></div>
<div class="t" style="left:1627.50px;top:59.99px;font-size:11px;color:#fff;font-weight:400;-webkit-text-stroke:0.49px #fff;transform:scaleX(0.7455);transform-origin:center 0;">SSL</div>
<svg class="s" style="left:1647.00px;top:82.00px;" width="20.00" height="31.00" viewBox="0 0 20 31" preserveAspectRatio="none"><g fill="none" stroke="#3a5a92" stroke-width="1.4"><path d="M2.5,2 V9 C2.5,12 5.5,13 5.5,15.5 C5.5,18 2.5,19 2.5,22 V29"/><path d="M17.5,2 V9 C17.5,12 14.5,13 14.5,15.5 C14.5,18 17.5,19 17.5,22 V29"/></g></svg>
<svg class="s" style="left:1655.20px;top:82.00px;" width="4.00" height="30.00" viewBox="0 0 4 30.00" preserveAspectRatio="none"><line x1="2" y1="0" x2="2" y2="30.00" stroke="#2f4a7c" stroke-width="1.8" stroke-dasharray="5.5,3.5"/></svg>
<div class="t" style="left:1666.80px;top:93.73px;font-size:10px;color:#3b5fb3;font-weight:400;transform:scaleX(1.0168);transform-origin:left 0;">50 Mbps</div>
<svg class="s" style="left:1632.00px;top:121.30px;" width="50.00" height="57.00" viewBox="0 0 50 57" preserveAspectRatio="none"><path d="M25.2,0.2 C31,4.5 41,9.2 49,10.5 V33 C49,45 35,53 25.2,56.8 C15.4,53 1,45 1,33 V10.5 C9,9.2 19.4,4.5 25.2,0.2 Z" fill="#3a63b0"/></svg>
<div class="t" style="left:1635.53px;top:144.33px;font-size:10px;color:#fff;font-weight:700;transform:scaleX(0.9229);transform-origin:center 0;">L7 DDOS</div>
<div class="r" style="left:1557.70px;top:185.90px;width:198.70px;height:53.10px;background:#fff;border:1px solid #e2e2e6;border-radius:6px;"></div>
<div class="r" style="left:1557.70px;top:185.90px;width:198.70px;height:23.80px;background:#3a63b0;border-radius:6px 6px 0 0;"></div>
<div class="t" style="left:1626.63px;top:194.43px;font-size:10px;color:#fff;font-weight:700;transform:scaleX(1.0142);transform-origin:center 0;">Certificate(1)</div>
<div class="r" style="left:1561.90px;top:215.30px;width:190.20px;height:20.10px;background:#ededf0;border-radius:10px;"></div>
<div class="r" style="left:1729.20px;top:216.20px;width:1.20px;height:18.30px;background:#cfcfd4;"></div>
<div class="t" style="left:1569.30px;top:221.23px;font-size:10px;color:#4a4a4a;font-weight:400;transform:scaleX(1.0514);transform-origin:left 0;">(cert-lvo4iyqj)</div>
<svg class="s" style="left:1735.10px;top:221.94px;" width="11.00" height="6.82" viewBox="0 0 12 7.4" preserveAspectRatio="none"><path d="M0.7,3.7 C2.5,0.9 4.2,0.6 6,0.6 C7.8,0.6 9.5,0.9 11.3,3.7 C9.5,6.5 7.8,6.8 6,6.8 C4.2,6.8 2.5,6.5 0.7,3.7 Z" fill="none" stroke="#3b5fb3" stroke-width="1.2"/><circle cx="6" cy="3.7" r="2.1" fill="#3b5fb3"/></svg>
<div class="r" style="left:1557.70px;top:245.00px;width:198.70px;height:53.20px;background:#fff;border:1px solid #e2e2e6;border-radius:6px;"></div>
<div class="r" style="left:1557.70px;top:245.00px;width:198.70px;height:23.90px;background:#3a63b0;border-radius:6px 6px 0 0;"></div>
<div class="t" style="left:1618.02px;top:253.03px;font-size:10px;color:#fff;font-weight:700;transform:scaleX(0.9686);transform-origin:center 0;">Request rules(1)</div>
<div class="r" style="left:1561.90px;top:274.50px;width:190.20px;height:20.10px;background:#ededf0;border-radius:10px;"></div>
<div class="r" style="left:1729.20px;top:275.40px;width:1.20px;height:18.30px;background:#cfcfd4;"></div>
<div class="t" style="left:1569.30px;top:279.83px;font-size:10px;color:#4a4a4a;font-weight:400;transform:scaleX(0.9814);transform-origin:left 0;">Block</div>
<svg class="s" style="left:1735.10px;top:281.14px;" width="11.00" height="6.82" viewBox="0 0 12 7.4" preserveAspectRatio="none"><path d="M0.7,3.7 C2.5,0.9 4.2,0.6 6,0.6 C7.8,0.6 9.5,0.9 11.3,3.7 C9.5,6.5 7.8,6.8 6,6.8 C4.2,6.8 2.5,6.5 0.7,3.7 Z" fill="none" stroke="#3b5fb3" stroke-width="1.2"/><circle cx="6" cy="3.7" r="2.1" fill="#3b5fb3"/></svg>
<svg class="s" style="left:1585.00px;top:305.00px;" width="150.00" height="150.00" viewBox="0 0 150 150" preserveAspectRatio="none"><defs><filter id="sh" x="-30%" y="-30%" width="160%" height="160%"><feGaussianBlur stdDeviation="4"/></filter></defs><path d="M72.1,4.6 C88,15 108,22.5 136,25.2 C135,60 131,85 124,97 C114,115 95,128 72.1,136 C49,128 30,115 20,97 C13,85 9,60 9,24.6 C36,22 56,15 72.1,4.6 Z" fill="#1c2f66" opacity="0.38" filter="url(#sh)" transform="translate(6,6)"/><path d="M72.1,4.6 C56,15 36,22 9,24.6 C9,60 13,85 20,97 C30,115 49,128 72.1,136 Z" fill="#2f569d"/><path d="M72.1,4.6 C88,15 108,22.5 136,25.2 C135,60 131,85 124,97 C114,115 95,128 72.1,136 Z" fill="#243f74"/><line x1="72.1" y1="5" x2="72.1" y2="136" stroke="#8a9ac0" stroke-width="1.2"/></svg>
<div class="t" style="left:1644.09px;top:331.34px;font-size:12px;color:#fff;font-weight:400;transform:scaleX(0.9308);transform-origin:center 0;">WAF</div>
<div class="t" style="left:1622.92px;top:357.03px;font-size:10px;color:#f4f6fb;font-weight:400;-webkit-text-stroke:0.45px #f4f6fb;transform:scaleX(1.0371);transform-origin:center 0;">Tight protection</div>
<div class="t" style="left:1623.84px;top:376.83px;font-size:10px;color:#f4f6fb;font-weight:400;-webkit-text-stroke:0.45px #f4f6fb;">Learning mode</div>
<div class="r" style="left:1602.30px;top:452.50px;width:109.40px;height:20.90px;background:#3a63b0;border-radius:6px;"></div>
<div class="t" style="left:1641.99px;top:458.73px;font-size:10px;color:#fff;font-weight:700;">Cache</div>
<div class="r" style="left:1602.00px;top:479.30px;width:109.90px;height:21.20px;background:#3a63b0;border-radius:6px;"></div>
<div class="t" style="left:1625.00px;top:485.53px;font-size:10px;color:#fff;font-weight:700;transform:scaleX(0.9155);transform-origin:center 0;">Compression</div>
<div class="r" style="left:1557.70px;top:528.20px;width:198.70px;height:52.50px;background:#fff;border:1px solid #e2e2e6;border-radius:6px;"></div>
<div class="r" style="left:1557.70px;top:528.20px;width:198.70px;height:23.30px;background:#3a63b0;border-radius:6px 6px 0 0;"></div>
<div class="t" style="left:1613.85px;top:536.03px;font-size:10px;color:#fff;font-weight:700;transform:scaleX(0.9516);transform-origin:center 0;">Response rules(1)</div>
<div class="r" style="left:1561.90px;top:557.10px;width:190.20px;height:20.00px;background:#ededf0;border-radius:10px;"></div>
<div class="r" style="left:1729.20px;top:558.00px;width:1.20px;height:18.20px;background:#cfcfd4;"></div>
<div class="t" style="left:1569.30px;top:562.53px;font-size:10px;color:#4a4a4a;font-weight:400;transform:scaleX(0.9909);transform-origin:left 0;">Security Headers</div>
<svg class="s" style="left:1735.10px;top:563.69px;" width="11.00" height="6.82" viewBox="0 0 12 7.4" preserveAspectRatio="none"><path d="M0.7,3.7 C2.5,0.9 4.2,0.6 6,0.6 C7.8,0.6 9.5,0.9 11.3,3.7 C9.5,6.5 7.8,6.8 6,6.8 C4.2,6.8 2.5,6.5 0.7,3.7 Z" fill="none" stroke="#3b5fb3" stroke-width="1.2"/><circle cx="6" cy="3.7" r="2.1" fill="#3b5fb3"/></svg>
<div class="r" style="left:1602.00px;top:586.40px;width:110.00px;height:19.30px;background:#3a63b0;border-radius:6px;"></div>
<div class="t" style="left:1615.05px;top:592.03px;font-size:10px;color:#fff;font-weight:700;transform:scaleX(0.9356);transform-origin:center 0;">Least Connection</div>
<div class="r" style="left:1645.30px;top:609.00px;width:23.30px;height:19.70px;background:#e8ecf1;border-radius:4px;"></div>
<svg class="s" style="left:1652.00px;top:612.80px;" width="10.00" height="12.00" viewBox="0 0 10 12" preserveAspectRatio="none"><path d="M0.8,0 H9.2 V1.8 H7.6 L7.9,4.6 C9.3,5.4 9.9,6.4 9.9,7.4 H0.1 C0.1,6.4 0.7,5.4 2.1,4.6 L2.4,1.8 H0.8 Z" fill="#3a63b0"/><rect x="4.2" y="7.2" width="1.6" height="4.8" fill="#3a63b0"/></svg>
<div class="r" style="left:1631.30px;top:636.50px;width:51.30px;height:21.10px;background:#3a63b0;border-radius:6px;"></div>
<div class="t" style="left:1640.01px;top:643.23px;font-size:10px;color:#fff;font-weight:700;transform:scaleX(0.8410);transform-origin:center 0;">Cond 1</div>
<svg class="s" style="left:1682.60px;top:646.30px;" width="40.40" height="4.00" viewBox="0 0 40.40 4" preserveAspectRatio="none"><line x1="0" y1="2" x2="40.40" y2="2" stroke="#7fd890" stroke-width="1.8" stroke-dasharray="5.5,3"/></svg>
<svg class="s" style="left:1655.20px;top:657.60px;" width="4.00" height="20.90" viewBox="0 0 4 20.90" preserveAspectRatio="none"><line x1="2" y1="0" x2="2" y2="20.90" stroke="#7fd890" stroke-width="1.8" stroke-dasharray="4.5,2.8"/></svg>
<svg class="s" style="left:1657.20px;top:676.50px;" width="65.80" height="4.00" viewBox="0 0 65.80 4" preserveAspectRatio="none"><line x1="0" y1="2" x2="65.80" y2="2" stroke="#7fd890" stroke-width="1.8" stroke-dasharray="5.5,3"/></svg>
<div class="r" style="left:1723.10px;top:639.00px;width:99.50px;height:16.70px;background:#e9e9ec;border-radius:6px;"></div>
<div class="t" style="left:1727.80px;top:643.43px;font-size:10px;color:#333;font-weight:400;transform:scaleX(1.0097);transform-origin:left 0;">demobackend01.tr...</div>
<div class="r" style="left:1723.10px;top:668.20px;width:99.50px;height:17.10px;background:#e9e9ec;border-radius:6px;"></div>
<div class="t" style="left:1727.80px;top:672.63px;font-size:10px;color:#333;font-weight:400;">demobackend02.t...</div>
<div class="r" style="left:1423.00px;top:704.00px;width:417.00px;height:1.20px;background:#e3e3e6;"></div>
<svg class="s" style="left:1538.00px;top:719.00px;" width="13.70" height="17.80" viewBox="0 0 13.7 17.8" preserveAspectRatio="none"><path d="M0,0 H8.5 L13.7,5.2 V17.8 H0 Z" fill="#3a63b0"/><path d="M8.5,0 V5.2 H13.7" fill="#fff" opacity="0.9"/><g stroke="#fff" stroke-width="1"><path d="M3,9 H10.7 M3,11.5 H10.7 M3,14 H10.7"/></g></svg>
<svg class="s" style="left:1566.90px;top:721.30px;" width="18.80" height="13.40" viewBox="0 0 18.8 13.4" preserveAspectRatio="none"><g fill="#dcdcdc"><rect x="0" y="0" width="1.6" height="13.4"/><rect x="0" y="11.8" width="18.8" height="1.6"/><rect x="4" y="6" width="2" height="4.8"/><rect x="7.5" y="3" width="2" height="7.8"/><rect x="11" y="5" width="2" height="5.8"/><rect x="14.5" y="1.5" width="2" height="9.3"/></g></svg>
<svg class="s" style="left:1601.00px;top:721.30px;" width="18.70" height="13.40" viewBox="0 0 18.7 13.4" preserveAspectRatio="none"><rect x="0" y="0" width="18.7" height="13.4" rx="1.8" fill="#3a63b0"/><path d="M0.8,1.6 L9.35,7.3 L17.9,1.6" fill="none" stroke="#fff" stroke-width="1.3"/></svg>
<div class="r" style="left:1628.00px;top:719.00px;width:1.20px;height:17.80px;background:#dedede;"></div>
<div class="t" style="left:1638.70px;top:719.28px;font-size:15.5px;color:#3a63b0;font-weight:400;transform:scaleX(0.8847);transform-origin:left 0;">XFF</div>
<div class="r" style="left:1674.00px;top:719.00px;width:1.20px;height:17.80px;background:#dedede;"></div>
<div class="t" style="left:1684.40px;top:719.28px;font-size:15.5px;color:#3a63b0;font-weight:400;transform:scaleX(0.7576);transform-origin:left 0;">QOS</div>
<svg class="s" style="left:1727.00px;top:719.80px;" width="17.00" height="17.00" viewBox="0 0 17 17" preserveAspectRatio="none"><path d="M2.6,4.2 A7,7 0 1 1 2,11" fill="none" stroke="#3a63b0" stroke-width="2.3"/><polygon points="0,1 6,5.8 0.5,7" fill="#3a63b0"/><path d="M8.8,4.8 V9 L11,10.8" fill="none" stroke="#3a63b0" stroke-width="1.9"/></svg>
<svg class="s" style="left:1760.50px;top:719.00px;" width="16.70" height="17.80" viewBox="0 0 16.7 17.8" preserveAspectRatio="none"><path d="M5,17.8 C3,15 0.3,12 0,9.5 C0,8.5 1,8 2,8.6 L4,10.5 V2.5 C4,1.2 6,1.2 6,2.5 V1.3 C6,0 8.2,0 8.2,1.3 V1.8 C8.2,0.6 10.4,0.6 10.4,1.8 V3 C10.4,1.8 12.6,1.8 12.6,3 V4 C12.6,2.8 14.8,2.8 14.8,4 V12 C14.8,15 13.5,16.5 12.8,17.8 Z" fill="#3a63b0"/></svg>
<div class="t" style="left:9.10px;top:909.99px;font-size:11px;color:#fff;font-weight:700;transform:scaleX(0.9552);transform-origin:left 0;">demo.tr7.com</div>
<div class="t" style="left:806.80px;top:906.32px;font-size:14.5px;color:#eef1f5;font-weight:400;transform:scaleX(0.9819);transform-origin:left 0;">Application Security Platform</div>
<div class="t" style="left:989.50px;top:904.88px;font-size:9px;color:#eef1f5;font-weight:400;transform:scaleX(0.9651);transform-origin:left 0;">®</div>
<svg class="s" style="left:1003.10px;top:903.10px;" width="23.60" height="18.90" viewBox="0 0 1147 932" preserveAspectRatio="none"><polygon fill="#fff" points="470,80 598,80 300,740 522,740 528,855 90,855"/><polygon fill="#fff" points="606,80 1040,80 665,855 542,855 830,195 606,190"/></svg>
<div class="t" style="left:1031.00px;top:906.75px;font-size:14px;color:#eef1f5;font-weight:400;font-style:italic;transform:scaleX(0.8960);transform-origin:left 0;">Est. 2008</div>
</body></html>
